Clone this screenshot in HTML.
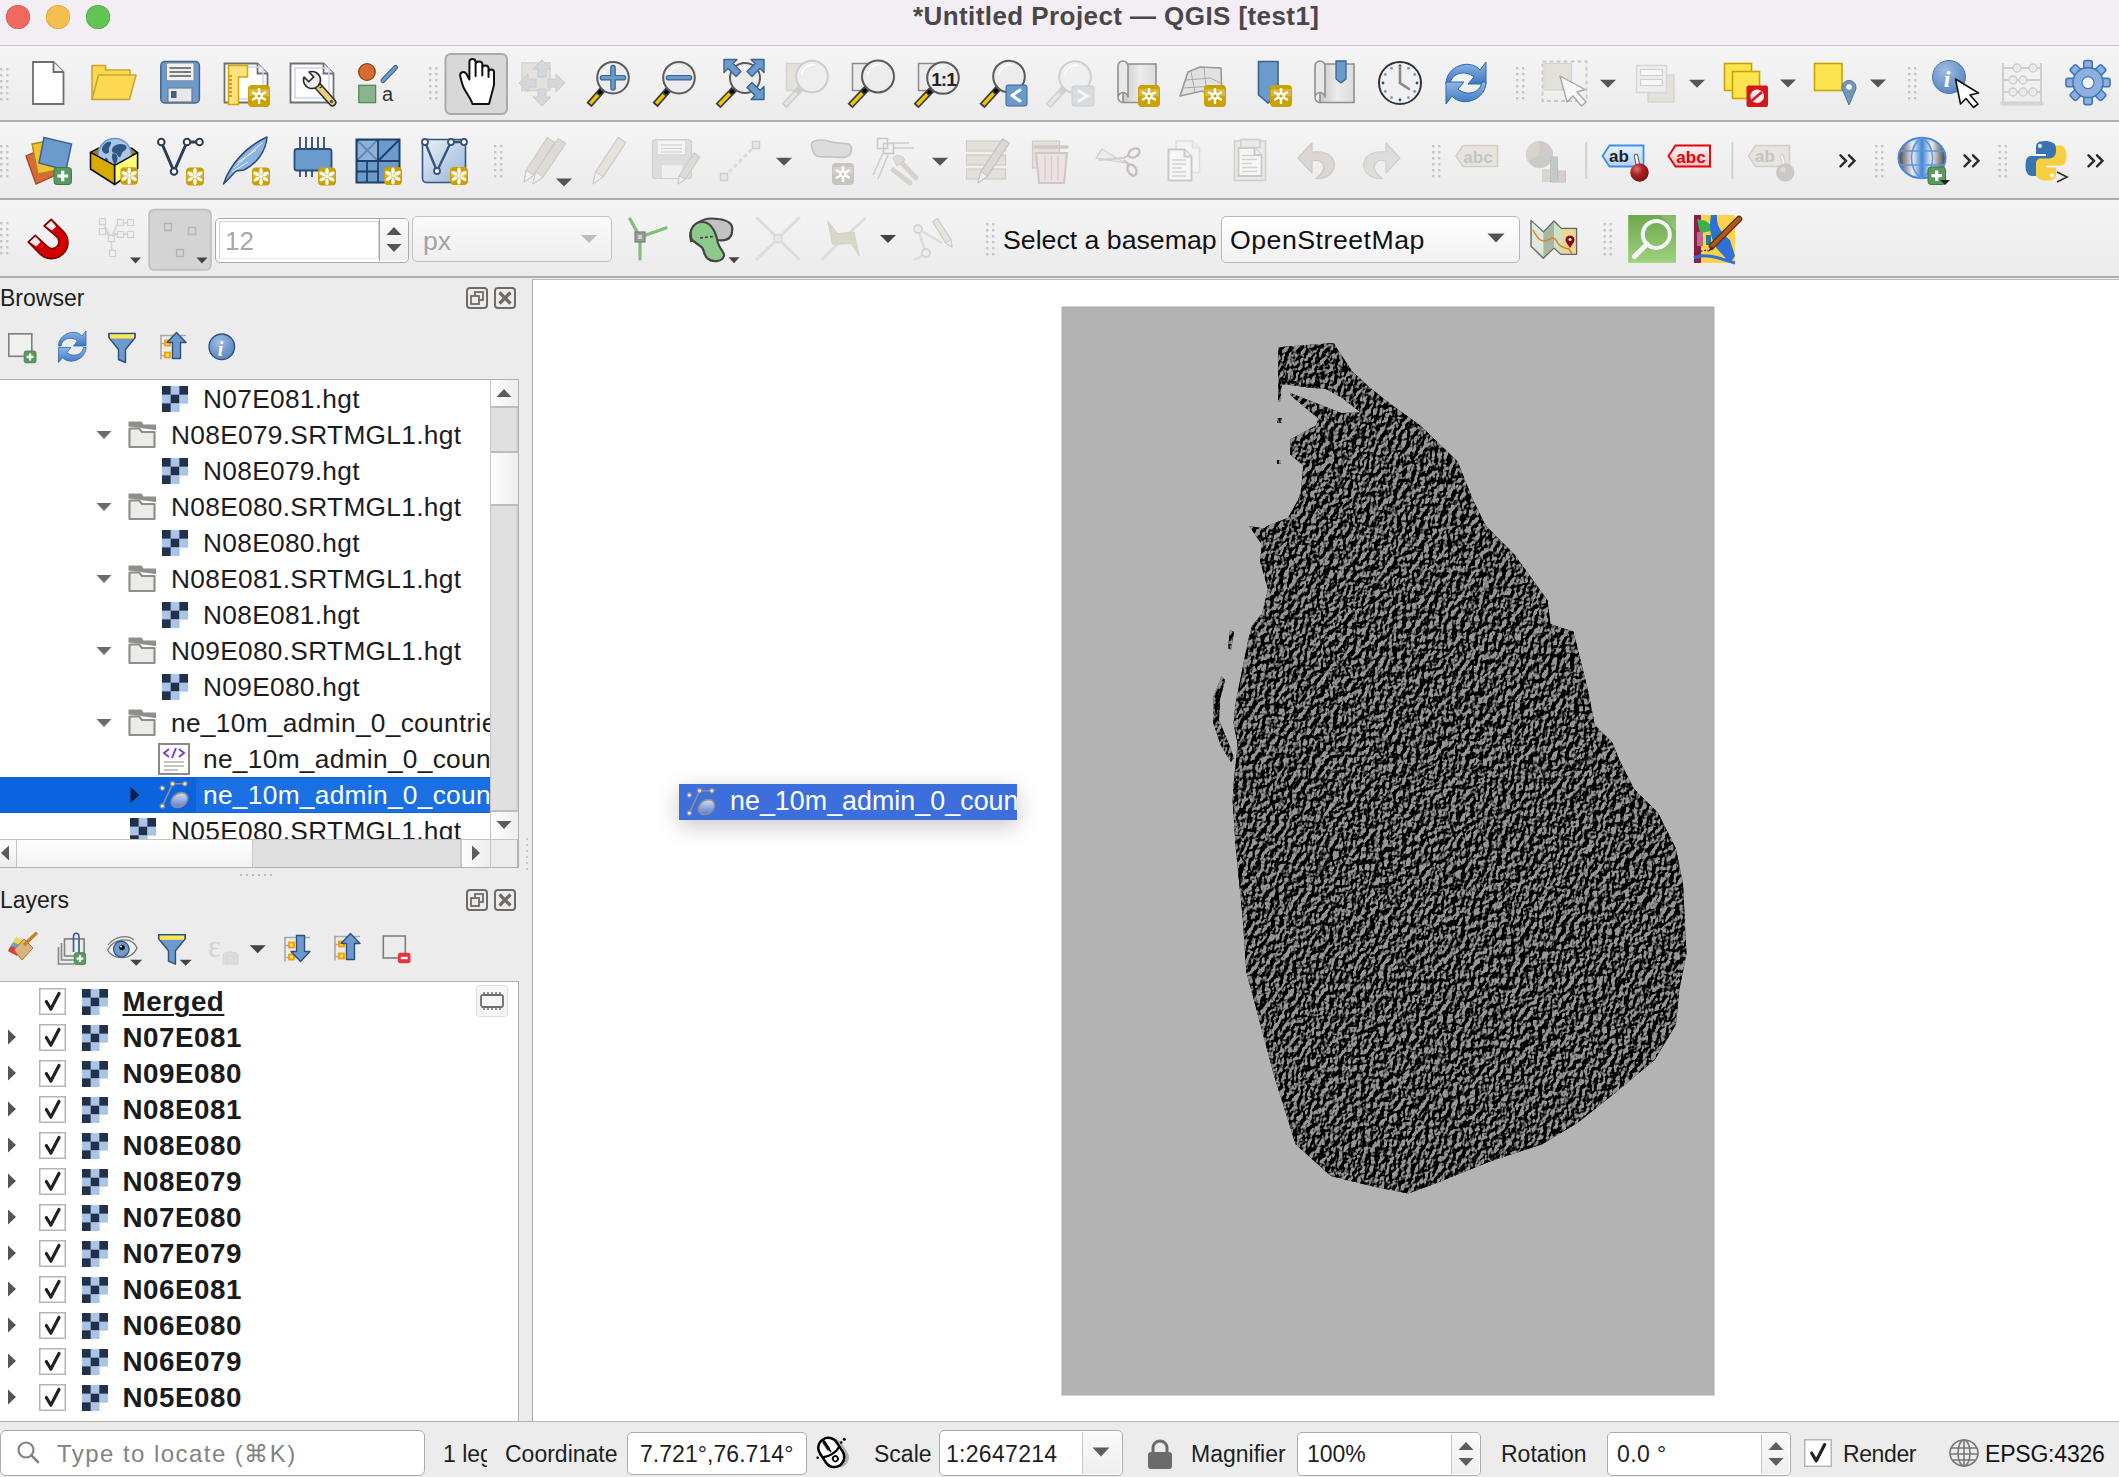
<!DOCTYPE html>
<html><head><meta charset="utf-8"><style>
html,body{margin:0;padding:0;width:2119px;height:1477px;overflow:hidden;background:#ececec;font-family:"Liberation Sans", sans-serif;}
div,svg{box-sizing:border-box;}
</style></head><body>
<div style="position:absolute;left:0px;top:0px;width:2119px;height:45px;background:#f3eef4;"></div><div style="position:absolute;left:0px;top:45px;width:2119px;height:1px;background:#c9c5ca;"></div><div style="position:absolute;left:6px;top:5px;width:24px;height:24px;border-radius:50%;background:#ee6a5f;box-shadow:inset 0 0 0 0.6px #d9574c;"></div><div style="position:absolute;left:46px;top:5px;width:24px;height:24px;border-radius:50%;background:#f5bf4f;box-shadow:inset 0 0 0 0.6px #dba53c;"></div><div style="position:absolute;left:86px;top:5px;width:24px;height:24px;border-radius:50%;background:#61c454;box-shadow:inset 0 0 0 0.6px #4ea83f;"></div><div style="position:absolute;left:913px;top:3.19px;height:31.2px;line-height:26px;font-size:26px;font-weight:bold;color:#4b4649;white-space:pre;letter-spacing:0.42px;">*Untitled Project — QGIS [test1]</div><div style="position:absolute;left:0px;top:46px;width:2119px;height:74px;background:linear-gradient(#f5f5f5,#ebebeb);"></div><div style="position:absolute;left:0px;top:122px;width:2119px;height:76px;background:linear-gradient(#f5f5f5,#ebebeb);"></div><div style="position:absolute;left:0px;top:200px;width:2119px;height:76px;background:linear-gradient(#f5f5f5,#ebebeb);"></div><div style="position:absolute;left:0px;top:120px;width:2119px;height:2px;background:#adadad;"></div><div style="position:absolute;left:0px;top:198px;width:2119px;height:2px;background:#adadad;"></div><div style="position:absolute;left:0px;top:276px;width:2119px;height:2px;background:#adadad;"></div><div style="position:absolute;left:0px;top:278px;width:533px;height:1143px;background:#ececec;"></div><div style="position:absolute;left:518px;top:278px;width:14px;height:1143px;background:#ececec;"></div><div style="position:absolute;left:532px;top:279px;width:1587px;height:1142px;background:#ffffff;border-left:1px solid #a9a9a9;border-top:1px solid #bdbdbd;"></div><div style="position:absolute;left:0px;top:1421px;width:2119px;height:56px;background:#ececec;border-top:1px solid #b4b4b4;"></div><div style="position:absolute;left:0px;top:286.53px;height:27.599999999999998px;line-height:23px;font-size:23px;font-weight:normal;color:#1e1e1e;white-space:pre;">Browser</div><div style="position:absolute;left:0px;top:888.53px;height:27.599999999999998px;line-height:23px;font-size:23px;font-weight:normal;color:#1e1e1e;white-space:pre;">Layers</div><div style="position:absolute;left:0px;top:379px;width:519px;height:489px;background:#fff;border:1px solid #b0b0b0;border-left:none;"></div><div style="position:absolute;left:0px;top:981px;width:519px;height:441px;background:#fff;border:1px solid #b0b0b0;border-left:none;"></div><div style="position:absolute;left:0;top:380;width:490px;height:459px;overflow:hidden;top:380px;"><svg style="position:absolute;left:162px;top:6px;" width="26" height="26" viewBox="0 0 26 26"><rect x="0.00" y="0.00" width="8.97" height="8.97" fill="#223049"/><rect x="8.67" y="0.00" width="8.97" height="8.97" fill="#a9c5e6"/><rect x="17.33" y="0.00" width="8.97" height="8.97" fill="#223049"/><rect x="0.00" y="8.67" width="8.97" height="8.97" fill="#a9c5e6"/><rect x="8.67" y="8.67" width="8.97" height="8.97" fill="#223049"/><rect x="17.33" y="8.67" width="8.97" height="8.97" fill="#a9c5e6"/><rect x="0.00" y="17.33" width="8.97" height="8.97" fill="#223049"/><rect x="8.67" y="17.33" width="8.97" height="8.97" fill="#a9c5e6"/></svg><div style="position:absolute;left:203px;top:5.74px;height:31.56px;line-height:26.3px;font-size:26.3px;font-weight:normal;color:#1d1d1d;white-space:pre;letter-spacing:0.3px;">N07E081.hgt</div><svg style="position:absolute;left:0;top:0;overflow:visible" width="1" height="1"><polygon points="96.5,51.0 111.5,51.0 104,59.0" fill="#6b6b6b"/></svg><svg style="position:absolute;left:128px;top:41px;" width="28" height="28" viewBox="0 0 28 28"><path d="M1.5 5.5 V1.5 H13 L15 4.5 H27 V9" fill="#8f908a" stroke="#8f908a" stroke-width="2"/><path d="M1.5 26 V7.5 H11 L14 11 H26.5 V26 Z" fill="#ececec" stroke="#8f908a" stroke-width="2.2" stroke-linejoin="round"/></svg><div style="position:absolute;left:171px;top:41.74px;height:31.56px;line-height:26.3px;font-size:26.3px;font-weight:normal;color:#1d1d1d;white-space:pre;letter-spacing:0.3px;">N08E079.SRTMGL1.hgt</div><svg style="position:absolute;left:162px;top:78px;" width="26" height="26" viewBox="0 0 26 26"><rect x="0.00" y="0.00" width="8.97" height="8.97" fill="#223049"/><rect x="8.67" y="0.00" width="8.97" height="8.97" fill="#a9c5e6"/><rect x="17.33" y="0.00" width="8.97" height="8.97" fill="#223049"/><rect x="0.00" y="8.67" width="8.97" height="8.97" fill="#a9c5e6"/><rect x="8.67" y="8.67" width="8.97" height="8.97" fill="#223049"/><rect x="17.33" y="8.67" width="8.97" height="8.97" fill="#a9c5e6"/><rect x="0.00" y="17.33" width="8.97" height="8.97" fill="#223049"/><rect x="8.67" y="17.33" width="8.97" height="8.97" fill="#a9c5e6"/></svg><div style="position:absolute;left:203px;top:77.74px;height:31.56px;line-height:26.3px;font-size:26.3px;font-weight:normal;color:#1d1d1d;white-space:pre;letter-spacing:0.3px;">N08E079.hgt</div><svg style="position:absolute;left:0;top:0;overflow:visible" width="1" height="1"><polygon points="96.5,123.0 111.5,123.0 104,131.0" fill="#6b6b6b"/></svg><svg style="position:absolute;left:128px;top:113px;" width="28" height="28" viewBox="0 0 28 28"><path d="M1.5 5.5 V1.5 H13 L15 4.5 H27 V9" fill="#8f908a" stroke="#8f908a" stroke-width="2"/><path d="M1.5 26 V7.5 H11 L14 11 H26.5 V26 Z" fill="#ececec" stroke="#8f908a" stroke-width="2.2" stroke-linejoin="round"/></svg><div style="position:absolute;left:171px;top:113.74px;height:31.56px;line-height:26.3px;font-size:26.3px;font-weight:normal;color:#1d1d1d;white-space:pre;letter-spacing:0.3px;">N08E080.SRTMGL1.hgt</div><svg style="position:absolute;left:162px;top:150px;" width="26" height="26" viewBox="0 0 26 26"><rect x="0.00" y="0.00" width="8.97" height="8.97" fill="#223049"/><rect x="8.67" y="0.00" width="8.97" height="8.97" fill="#a9c5e6"/><rect x="17.33" y="0.00" width="8.97" height="8.97" fill="#223049"/><rect x="0.00" y="8.67" width="8.97" height="8.97" fill="#a9c5e6"/><rect x="8.67" y="8.67" width="8.97" height="8.97" fill="#223049"/><rect x="17.33" y="8.67" width="8.97" height="8.97" fill="#a9c5e6"/><rect x="0.00" y="17.33" width="8.97" height="8.97" fill="#223049"/><rect x="8.67" y="17.33" width="8.97" height="8.97" fill="#a9c5e6"/></svg><div style="position:absolute;left:203px;top:149.74px;height:31.56px;line-height:26.3px;font-size:26.3px;font-weight:normal;color:#1d1d1d;white-space:pre;letter-spacing:0.3px;">N08E080.hgt</div><svg style="position:absolute;left:0;top:0;overflow:visible" width="1" height="1"><polygon points="96.5,195.0 111.5,195.0 104,203.0" fill="#6b6b6b"/></svg><svg style="position:absolute;left:128px;top:185px;" width="28" height="28" viewBox="0 0 28 28"><path d="M1.5 5.5 V1.5 H13 L15 4.5 H27 V9" fill="#8f908a" stroke="#8f908a" stroke-width="2"/><path d="M1.5 26 V7.5 H11 L14 11 H26.5 V26 Z" fill="#ececec" stroke="#8f908a" stroke-width="2.2" stroke-linejoin="round"/></svg><div style="position:absolute;left:171px;top:185.74px;height:31.56px;line-height:26.3px;font-size:26.3px;font-weight:normal;color:#1d1d1d;white-space:pre;letter-spacing:0.3px;">N08E081.SRTMGL1.hgt</div><svg style="position:absolute;left:162px;top:222px;" width="26" height="26" viewBox="0 0 26 26"><rect x="0.00" y="0.00" width="8.97" height="8.97" fill="#223049"/><rect x="8.67" y="0.00" width="8.97" height="8.97" fill="#a9c5e6"/><rect x="17.33" y="0.00" width="8.97" height="8.97" fill="#223049"/><rect x="0.00" y="8.67" width="8.97" height="8.97" fill="#a9c5e6"/><rect x="8.67" y="8.67" width="8.97" height="8.97" fill="#223049"/><rect x="17.33" y="8.67" width="8.97" height="8.97" fill="#a9c5e6"/><rect x="0.00" y="17.33" width="8.97" height="8.97" fill="#223049"/><rect x="8.67" y="17.33" width="8.97" height="8.97" fill="#a9c5e6"/></svg><div style="position:absolute;left:203px;top:221.74px;height:31.56px;line-height:26.3px;font-size:26.3px;font-weight:normal;color:#1d1d1d;white-space:pre;letter-spacing:0.3px;">N08E081.hgt</div><svg style="position:absolute;left:0;top:0;overflow:visible" width="1" height="1"><polygon points="96.5,267.0 111.5,267.0 104,275.0" fill="#6b6b6b"/></svg><svg style="position:absolute;left:128px;top:257px;" width="28" height="28" viewBox="0 0 28 28"><path d="M1.5 5.5 V1.5 H13 L15 4.5 H27 V9" fill="#8f908a" stroke="#8f908a" stroke-width="2"/><path d="M1.5 26 V7.5 H11 L14 11 H26.5 V26 Z" fill="#ececec" stroke="#8f908a" stroke-width="2.2" stroke-linejoin="round"/></svg><div style="position:absolute;left:171px;top:257.74px;height:31.56px;line-height:26.3px;font-size:26.3px;font-weight:normal;color:#1d1d1d;white-space:pre;letter-spacing:0.3px;">N09E080.SRTMGL1.hgt</div><svg style="position:absolute;left:162px;top:294px;" width="26" height="26" viewBox="0 0 26 26"><rect x="0.00" y="0.00" width="8.97" height="8.97" fill="#223049"/><rect x="8.67" y="0.00" width="8.97" height="8.97" fill="#a9c5e6"/><rect x="17.33" y="0.00" width="8.97" height="8.97" fill="#223049"/><rect x="0.00" y="8.67" width="8.97" height="8.97" fill="#a9c5e6"/><rect x="8.67" y="8.67" width="8.97" height="8.97" fill="#223049"/><rect x="17.33" y="8.67" width="8.97" height="8.97" fill="#a9c5e6"/><rect x="0.00" y="17.33" width="8.97" height="8.97" fill="#223049"/><rect x="8.67" y="17.33" width="8.97" height="8.97" fill="#a9c5e6"/></svg><div style="position:absolute;left:203px;top:293.74px;height:31.56px;line-height:26.3px;font-size:26.3px;font-weight:normal;color:#1d1d1d;white-space:pre;letter-spacing:0.3px;">N09E080.hgt</div><svg style="position:absolute;left:0;top:0;overflow:visible" width="1" height="1"><polygon points="96.5,339.0 111.5,339.0 104,347.0" fill="#6b6b6b"/></svg><svg style="position:absolute;left:128px;top:329px;" width="28" height="28" viewBox="0 0 28 28"><path d="M1.5 5.5 V1.5 H13 L15 4.5 H27 V9" fill="#8f908a" stroke="#8f908a" stroke-width="2"/><path d="M1.5 26 V7.5 H11 L14 11 H26.5 V26 Z" fill="#ececec" stroke="#8f908a" stroke-width="2.2" stroke-linejoin="round"/></svg><div style="position:absolute;left:171px;top:329.74px;height:31.56px;line-height:26.3px;font-size:26.3px;font-weight:normal;color:#1d1d1d;white-space:pre;letter-spacing:0.3px;">ne_10m_admin_0_countries</div><svg style="position:absolute;left:158px;top:363px;" width="32" height="32" viewBox="0 0 32 32"><rect x="1" y="1" width="30" height="30" fill="#fff" stroke="#8a8a8a" stroke-width="2"/><path d="M11 6 L6 10 L11 14 M21 6 L26 10 L21 14 M18 5 L14 15" fill="none" stroke="#7a3fc7" stroke-width="2"/><path d="M6 19 H26 M6 23 H26 M6 27 H20" stroke="#b0b0b0" stroke-width="1.5"/></svg><div style="position:absolute;left:203px;top:365.74px;height:31.56px;line-height:26.3px;font-size:26.3px;font-weight:normal;color:#1d1d1d;white-space:pre;letter-spacing:0.3px;">ne_10m_admin_0_countries</div><div style="position:absolute;left:0px;top:397px;width:490px;height:36px;background:#0b64de;"></div><div style="position:absolute;left:196px;top:398px;width:294px;height:34px;background:#1a6fe3;"></div><svg style="position:absolute;left:0;top:0;overflow:visible" width="1" height="1"><polygon points="130.5,407.0 130.5,423.0 139.5,415" fill="#0a1f4a"/></svg><svg style="position:absolute;left:158px;top:399px;" width="32" height="32" viewBox="0 0 32 32"><defs><linearGradient id="vbg" x1="0" y1="1" x2="1" y2="0"><stop offset="0" stop-color="#3f66c8"/><stop offset="1" stop-color="#f4f6fb"/></linearGradient></defs><path d="M4.3 27 L14.6 4.8 H26.9" fill="none" stroke="#8f8f8f" stroke-width="1.6"/><ellipse cx="21.5" cy="21" rx="8.8" ry="6.6" transform="rotate(-35 21.5 21)" fill="url(#vbg)" stroke="#8f8f8f" stroke-width="1.8"/><circle cx="4.3" cy="9.1" r="2.2" fill="#e8e8e8" stroke="#8a8a8a" stroke-width="1.2"/><circle cx="14.6" cy="4.8" r="2.2" fill="#e8e8e8" stroke="#8a8a8a" stroke-width="1.2"/><circle cx="26.9" cy="4.8" r="2.2" fill="#e8e8e8" stroke="#8a8a8a" stroke-width="1.2"/><circle cx="4.3" cy="27" r="2.2" fill="#e8e8e8" stroke="#8a8a8a" stroke-width="1.2"/></svg><div style="position:absolute;left:203px;top:401.74px;height:31.56px;line-height:26.3px;font-size:26.3px;font-weight:normal;color:#ffffff;white-space:pre;letter-spacing:0.3px;">ne_10m_admin_0_countries</div><svg style="position:absolute;left:130px;top:438px;" width="26" height="26" viewBox="0 0 26 26"><rect x="0.00" y="0.00" width="8.97" height="8.97" fill="#223049"/><rect x="8.67" y="0.00" width="8.97" height="8.97" fill="#a9c5e6"/><rect x="17.33" y="0.00" width="8.97" height="8.97" fill="#223049"/><rect x="0.00" y="8.67" width="8.97" height="8.97" fill="#a9c5e6"/><rect x="8.67" y="8.67" width="8.97" height="8.97" fill="#223049"/><rect x="17.33" y="8.67" width="8.97" height="8.97" fill="#a9c5e6"/><rect x="0.00" y="17.33" width="8.97" height="8.97" fill="#223049"/><rect x="8.67" y="17.33" width="8.97" height="8.97" fill="#a9c5e6"/></svg><div style="position:absolute;left:171px;top:437.74px;height:31.56px;line-height:26.3px;font-size:26.3px;font-weight:normal;color:#1d1d1d;white-space:pre;letter-spacing:0.3px;">N05E080.SRTMGL1.hgt</div></div><div style="position:absolute;left:490px;top:380px;width:28px;height:459px;background:#ececec;border-left:1px solid #c4c4c4;"></div><div style="position:absolute;left:491px;top:380px;width:27px;height:27px;background:linear-gradient(90deg,#fdfdfd,#eeeeee);"></div><svg style="position:absolute;left:0;top:0;overflow:visible" width="1" height="1"><polygon points="496.5,397.0 511.5,397.0 504,389.0" fill="#5c5c5c"/></svg><div style="position:absolute;left:491px;top:406px;width:27px;height:2px;background:#bdbdbd;"></div><div style="position:absolute;left:491px;top:408px;width:27px;height:43px;background:#e0e0e0;border-right:2px solid #d4d4d4;"></div><div style="position:absolute;left:491px;top:451px;width:27px;height:2px;background:#bdbdbd;"></div><div style="position:absolute;left:491px;top:453px;width:27px;height:51px;background:linear-gradient(90deg,#fdfdfd,#eeeeee);"></div><div style="position:absolute;left:491px;top:504px;width:27px;height:2px;background:#bdbdbd;"></div><div style="position:absolute;left:491px;top:506px;width:27px;height:304px;background:#e0e0e0;border-right:2px solid #d4d4d4;"></div><div style="position:absolute;left:491px;top:810px;width:27px;height:2px;background:#bdbdbd;"></div><div style="position:absolute;left:491px;top:812px;width:27px;height:27px;background:linear-gradient(90deg,#fdfdfd,#eeeeee);"></div><svg style="position:absolute;left:0;top:0;overflow:visible" width="1" height="1"><polygon points="496.5,821.0 511.5,821.0 504,829.0" fill="#5c5c5c"/></svg><div style="position:absolute;left:0px;top:839px;width:518px;height:29px;background:#ececec;border-top:1px solid #c4c4c4;border-bottom:1px solid #b0b0b0;"></div><div style="position:absolute;left:0px;top:840px;width:17px;height:27px;background:linear-gradient(#fdfdfd,#eeeeee);border-right:1px solid #c4c4c4;"></div><svg style="position:absolute;left:0;top:0;overflow:visible" width="1" height="1"><polygon points="9.0,845.5 9.0,860.5 1.0,853" fill="#5c5c5c"/></svg><div style="position:absolute;left:17px;top:840px;width:235px;height:27px;background:linear-gradient(#fdfdfd,#f3f3f3);"></div><div style="position:absolute;left:252px;top:840px;width:210px;height:27px;background:#e0e0e0;border-left:1px solid #c8c8c8;border-right:2px solid #c8c8c8;"></div><div style="position:absolute;left:462px;top:840px;width:28px;height:27px;background:linear-gradient(90deg,#fdfdfd,#eeeeee);"></div><svg style="position:absolute;left:0;top:0;overflow:visible" width="1" height="1"><polygon points="472.0,845.5 472.0,860.5 480.0,853" fill="#5c5c5c"/></svg><div style="position:absolute;left:490px;top:839px;width:28px;height:29px;background:#ececec;border-left:1px solid #c4c4c4;border-top:1px solid #c4c4c4;border-bottom:1px solid #b0b0b0;border-right:1px solid #b0b0b0;"></div><div style="position:absolute;left:240px;top:874px;width:2px;height:2px;background:#bdbdbd;"></div><div style="position:absolute;left:246px;top:874px;width:2px;height:2px;background:#bdbdbd;"></div><div style="position:absolute;left:252px;top:874px;width:2px;height:2px;background:#bdbdbd;"></div><div style="position:absolute;left:258px;top:874px;width:2px;height:2px;background:#bdbdbd;"></div><div style="position:absolute;left:264px;top:874px;width:2px;height:2px;background:#bdbdbd;"></div><div style="position:absolute;left:270px;top:874px;width:2px;height:2px;background:#bdbdbd;"></div><div style="position:absolute;left:526px;top:838px;width:2px;height:2px;background:#c8c8c8;"></div><div style="position:absolute;left:526px;top:844px;width:2px;height:2px;background:#c8c8c8;"></div><div style="position:absolute;left:526px;top:850px;width:2px;height:2px;background:#c8c8c8;"></div><div style="position:absolute;left:526px;top:856px;width:2px;height:2px;background:#c8c8c8;"></div><div style="position:absolute;left:526px;top:862px;width:2px;height:2px;background:#c8c8c8;"></div><div style="position:absolute;left:526px;top:868px;width:2px;height:2px;background:#c8c8c8;"></div><svg style="position:absolute;left:466px;top:287px;" width="22" height="22" viewBox="0 0 22 22"><rect x="1" y="1" width="20" height="20" rx="3" fill="none" stroke="#6f6c68" stroke-width="2"/><rect x="9" y="5" width="8" height="8" fill="none" stroke="#6f6c68" stroke-width="1.8"/><rect x="5" y="9" width="8" height="8" fill="#ececec" stroke="#6f6c68" stroke-width="1.8"/></svg><svg style="position:absolute;left:494px;top:287px;" width="22" height="22" viewBox="0 0 22 22"><rect x="1" y="1" width="20" height="20" rx="3" fill="none" stroke="#6f6c68" stroke-width="2"/><path d="M5.5 5.5 L16.5 16.5 M16.5 5.5 L5.5 16.5" stroke="#6f6c68" stroke-width="3.2"/></svg><svg style="position:absolute;left:466px;top:889px;" width="22" height="22" viewBox="0 0 22 22"><rect x="1" y="1" width="20" height="20" rx="3" fill="none" stroke="#6f6c68" stroke-width="2"/><rect x="9" y="5" width="8" height="8" fill="none" stroke="#6f6c68" stroke-width="1.8"/><rect x="5" y="9" width="8" height="8" fill="#ececec" stroke="#6f6c68" stroke-width="1.8"/></svg><svg style="position:absolute;left:494px;top:889px;" width="22" height="22" viewBox="0 0 22 22"><rect x="1" y="1" width="20" height="20" rx="3" fill="none" stroke="#6f6c68" stroke-width="2"/><path d="M5.5 5.5 L16.5 16.5 M16.5 5.5 L5.5 16.5" stroke="#6f6c68" stroke-width="3.2"/></svg><svg style="position:absolute;left:39px;top:988px;" width="27" height="27" viewBox="0 0 27 27"><rect x="0.75" y="0.75" width="25.5" height="25.5" fill="#fff" stroke="#b5b5b5" stroke-width="1.5"/><path d="M7.3 13.5 L11.9 21.1 L20.0 5.4" fill="none" stroke="#222" stroke-width="3.2" stroke-linecap="round" stroke-linejoin="round"/></svg><svg style="position:absolute;left:82px;top:989px;" width="26" height="26" viewBox="0 0 26 26"><rect x="0.00" y="0.00" width="8.97" height="8.97" fill="#223049"/><rect x="8.67" y="0.00" width="8.97" height="8.97" fill="#a9c5e6"/><rect x="17.33" y="0.00" width="8.97" height="8.97" fill="#223049"/><rect x="0.00" y="8.67" width="8.97" height="8.97" fill="#a9c5e6"/><rect x="8.67" y="8.67" width="8.97" height="8.97" fill="#223049"/><rect x="17.33" y="8.67" width="8.97" height="8.97" fill="#a9c5e6"/><rect x="0.00" y="17.33" width="8.97" height="8.97" fill="#223049"/><rect x="8.67" y="17.33" width="8.97" height="8.97" fill="#a9c5e6"/></svg><div style="position:absolute;left:122.5px;top:987.97px;height:33.36px;line-height:27.8px;font-size:27.8px;font-weight:bold;color:#1b1b1b;white-space:pre;letter-spacing:0.5px;text-decoration:underline;text-decoration-thickness:2px;text-underline-offset:3px;">Merged</div><svg style="position:absolute;left:0;top:0;overflow:visible" width="1" height="1"><polygon points="8.0,1029.5 8.0,1044.5 16.0,1037" fill="#555555"/></svg><svg style="position:absolute;left:39px;top:1024px;" width="27" height="27" viewBox="0 0 27 27"><rect x="0.75" y="0.75" width="25.5" height="25.5" fill="#fff" stroke="#b5b5b5" stroke-width="1.5"/><path d="M7.3 13.5 L11.9 21.1 L20.0 5.4" fill="none" stroke="#222" stroke-width="3.2" stroke-linecap="round" stroke-linejoin="round"/></svg><svg style="position:absolute;left:82px;top:1025px;" width="26" height="26" viewBox="0 0 26 26"><rect x="0.00" y="0.00" width="8.97" height="8.97" fill="#223049"/><rect x="8.67" y="0.00" width="8.97" height="8.97" fill="#a9c5e6"/><rect x="17.33" y="0.00" width="8.97" height="8.97" fill="#223049"/><rect x="0.00" y="8.67" width="8.97" height="8.97" fill="#a9c5e6"/><rect x="8.67" y="8.67" width="8.97" height="8.97" fill="#223049"/><rect x="17.33" y="8.67" width="8.97" height="8.97" fill="#a9c5e6"/><rect x="0.00" y="17.33" width="8.97" height="8.97" fill="#223049"/><rect x="8.67" y="17.33" width="8.97" height="8.97" fill="#a9c5e6"/></svg><div style="position:absolute;left:122.5px;top:1023.97px;height:33.36px;line-height:27.8px;font-size:27.8px;font-weight:bold;color:#1b1b1b;white-space:pre;letter-spacing:0.5px;">N07E081</div><svg style="position:absolute;left:0;top:0;overflow:visible" width="1" height="1"><polygon points="8.0,1065.5 8.0,1080.5 16.0,1073" fill="#555555"/></svg><svg style="position:absolute;left:39px;top:1060px;" width="27" height="27" viewBox="0 0 27 27"><rect x="0.75" y="0.75" width="25.5" height="25.5" fill="#fff" stroke="#b5b5b5" stroke-width="1.5"/><path d="M7.3 13.5 L11.9 21.1 L20.0 5.4" fill="none" stroke="#222" stroke-width="3.2" stroke-linecap="round" stroke-linejoin="round"/></svg><svg style="position:absolute;left:82px;top:1061px;" width="26" height="26" viewBox="0 0 26 26"><rect x="0.00" y="0.00" width="8.97" height="8.97" fill="#223049"/><rect x="8.67" y="0.00" width="8.97" height="8.97" fill="#a9c5e6"/><rect x="17.33" y="0.00" width="8.97" height="8.97" fill="#223049"/><rect x="0.00" y="8.67" width="8.97" height="8.97" fill="#a9c5e6"/><rect x="8.67" y="8.67" width="8.97" height="8.97" fill="#223049"/><rect x="17.33" y="8.67" width="8.97" height="8.97" fill="#a9c5e6"/><rect x="0.00" y="17.33" width="8.97" height="8.97" fill="#223049"/><rect x="8.67" y="17.33" width="8.97" height="8.97" fill="#a9c5e6"/></svg><div style="position:absolute;left:122.5px;top:1059.97px;height:33.36px;line-height:27.8px;font-size:27.8px;font-weight:bold;color:#1b1b1b;white-space:pre;letter-spacing:0.5px;">N09E080</div><svg style="position:absolute;left:0;top:0;overflow:visible" width="1" height="1"><polygon points="8.0,1101.5 8.0,1116.5 16.0,1109" fill="#555555"/></svg><svg style="position:absolute;left:39px;top:1096px;" width="27" height="27" viewBox="0 0 27 27"><rect x="0.75" y="0.75" width="25.5" height="25.5" fill="#fff" stroke="#b5b5b5" stroke-width="1.5"/><path d="M7.3 13.5 L11.9 21.1 L20.0 5.4" fill="none" stroke="#222" stroke-width="3.2" stroke-linecap="round" stroke-linejoin="round"/></svg><svg style="position:absolute;left:82px;top:1097px;" width="26" height="26" viewBox="0 0 26 26"><rect x="0.00" y="0.00" width="8.97" height="8.97" fill="#223049"/><rect x="8.67" y="0.00" width="8.97" height="8.97" fill="#a9c5e6"/><rect x="17.33" y="0.00" width="8.97" height="8.97" fill="#223049"/><rect x="0.00" y="8.67" width="8.97" height="8.97" fill="#a9c5e6"/><rect x="8.67" y="8.67" width="8.97" height="8.97" fill="#223049"/><rect x="17.33" y="8.67" width="8.97" height="8.97" fill="#a9c5e6"/><rect x="0.00" y="17.33" width="8.97" height="8.97" fill="#223049"/><rect x="8.67" y="17.33" width="8.97" height="8.97" fill="#a9c5e6"/></svg><div style="position:absolute;left:122.5px;top:1095.97px;height:33.36px;line-height:27.8px;font-size:27.8px;font-weight:bold;color:#1b1b1b;white-space:pre;letter-spacing:0.5px;">N08E081</div><svg style="position:absolute;left:0;top:0;overflow:visible" width="1" height="1"><polygon points="8.0,1137.5 8.0,1152.5 16.0,1145" fill="#555555"/></svg><svg style="position:absolute;left:39px;top:1132px;" width="27" height="27" viewBox="0 0 27 27"><rect x="0.75" y="0.75" width="25.5" height="25.5" fill="#fff" stroke="#b5b5b5" stroke-width="1.5"/><path d="M7.3 13.5 L11.9 21.1 L20.0 5.4" fill="none" stroke="#222" stroke-width="3.2" stroke-linecap="round" stroke-linejoin="round"/></svg><svg style="position:absolute;left:82px;top:1133px;" width="26" height="26" viewBox="0 0 26 26"><rect x="0.00" y="0.00" width="8.97" height="8.97" fill="#223049"/><rect x="8.67" y="0.00" width="8.97" height="8.97" fill="#a9c5e6"/><rect x="17.33" y="0.00" width="8.97" height="8.97" fill="#223049"/><rect x="0.00" y="8.67" width="8.97" height="8.97" fill="#a9c5e6"/><rect x="8.67" y="8.67" width="8.97" height="8.97" fill="#223049"/><rect x="17.33" y="8.67" width="8.97" height="8.97" fill="#a9c5e6"/><rect x="0.00" y="17.33" width="8.97" height="8.97" fill="#223049"/><rect x="8.67" y="17.33" width="8.97" height="8.97" fill="#a9c5e6"/></svg><div style="position:absolute;left:122.5px;top:1131.97px;height:33.36px;line-height:27.8px;font-size:27.8px;font-weight:bold;color:#1b1b1b;white-space:pre;letter-spacing:0.5px;">N08E080</div><svg style="position:absolute;left:0;top:0;overflow:visible" width="1" height="1"><polygon points="8.0,1173.5 8.0,1188.5 16.0,1181" fill="#555555"/></svg><svg style="position:absolute;left:39px;top:1168px;" width="27" height="27" viewBox="0 0 27 27"><rect x="0.75" y="0.75" width="25.5" height="25.5" fill="#fff" stroke="#b5b5b5" stroke-width="1.5"/><path d="M7.3 13.5 L11.9 21.1 L20.0 5.4" fill="none" stroke="#222" stroke-width="3.2" stroke-linecap="round" stroke-linejoin="round"/></svg><svg style="position:absolute;left:82px;top:1169px;" width="26" height="26" viewBox="0 0 26 26"><rect x="0.00" y="0.00" width="8.97" height="8.97" fill="#223049"/><rect x="8.67" y="0.00" width="8.97" height="8.97" fill="#a9c5e6"/><rect x="17.33" y="0.00" width="8.97" height="8.97" fill="#223049"/><rect x="0.00" y="8.67" width="8.97" height="8.97" fill="#a9c5e6"/><rect x="8.67" y="8.67" width="8.97" height="8.97" fill="#223049"/><rect x="17.33" y="8.67" width="8.97" height="8.97" fill="#a9c5e6"/><rect x="0.00" y="17.33" width="8.97" height="8.97" fill="#223049"/><rect x="8.67" y="17.33" width="8.97" height="8.97" fill="#a9c5e6"/></svg><div style="position:absolute;left:122.5px;top:1167.97px;height:33.36px;line-height:27.8px;font-size:27.8px;font-weight:bold;color:#1b1b1b;white-space:pre;letter-spacing:0.5px;">N08E079</div><svg style="position:absolute;left:0;top:0;overflow:visible" width="1" height="1"><polygon points="8.0,1209.5 8.0,1224.5 16.0,1217" fill="#555555"/></svg><svg style="position:absolute;left:39px;top:1204px;" width="27" height="27" viewBox="0 0 27 27"><rect x="0.75" y="0.75" width="25.5" height="25.5" fill="#fff" stroke="#b5b5b5" stroke-width="1.5"/><path d="M7.3 13.5 L11.9 21.1 L20.0 5.4" fill="none" stroke="#222" stroke-width="3.2" stroke-linecap="round" stroke-linejoin="round"/></svg><svg style="position:absolute;left:82px;top:1205px;" width="26" height="26" viewBox="0 0 26 26"><rect x="0.00" y="0.00" width="8.97" height="8.97" fill="#223049"/><rect x="8.67" y="0.00" width="8.97" height="8.97" fill="#a9c5e6"/><rect x="17.33" y="0.00" width="8.97" height="8.97" fill="#223049"/><rect x="0.00" y="8.67" width="8.97" height="8.97" fill="#a9c5e6"/><rect x="8.67" y="8.67" width="8.97" height="8.97" fill="#223049"/><rect x="17.33" y="8.67" width="8.97" height="8.97" fill="#a9c5e6"/><rect x="0.00" y="17.33" width="8.97" height="8.97" fill="#223049"/><rect x="8.67" y="17.33" width="8.97" height="8.97" fill="#a9c5e6"/></svg><div style="position:absolute;left:122.5px;top:1203.97px;height:33.36px;line-height:27.8px;font-size:27.8px;font-weight:bold;color:#1b1b1b;white-space:pre;letter-spacing:0.5px;">N07E080</div><svg style="position:absolute;left:0;top:0;overflow:visible" width="1" height="1"><polygon points="8.0,1245.5 8.0,1260.5 16.0,1253" fill="#555555"/></svg><svg style="position:absolute;left:39px;top:1240px;" width="27" height="27" viewBox="0 0 27 27"><rect x="0.75" y="0.75" width="25.5" height="25.5" fill="#fff" stroke="#b5b5b5" stroke-width="1.5"/><path d="M7.3 13.5 L11.9 21.1 L20.0 5.4" fill="none" stroke="#222" stroke-width="3.2" stroke-linecap="round" stroke-linejoin="round"/></svg><svg style="position:absolute;left:82px;top:1241px;" width="26" height="26" viewBox="0 0 26 26"><rect x="0.00" y="0.00" width="8.97" height="8.97" fill="#223049"/><rect x="8.67" y="0.00" width="8.97" height="8.97" fill="#a9c5e6"/><rect x="17.33" y="0.00" width="8.97" height="8.97" fill="#223049"/><rect x="0.00" y="8.67" width="8.97" height="8.97" fill="#a9c5e6"/><rect x="8.67" y="8.67" width="8.97" height="8.97" fill="#223049"/><rect x="17.33" y="8.67" width="8.97" height="8.97" fill="#a9c5e6"/><rect x="0.00" y="17.33" width="8.97" height="8.97" fill="#223049"/><rect x="8.67" y="17.33" width="8.97" height="8.97" fill="#a9c5e6"/></svg><div style="position:absolute;left:122.5px;top:1239.97px;height:33.36px;line-height:27.8px;font-size:27.8px;font-weight:bold;color:#1b1b1b;white-space:pre;letter-spacing:0.5px;">N07E079</div><svg style="position:absolute;left:0;top:0;overflow:visible" width="1" height="1"><polygon points="8.0,1281.5 8.0,1296.5 16.0,1289" fill="#555555"/></svg><svg style="position:absolute;left:39px;top:1276px;" width="27" height="27" viewBox="0 0 27 27"><rect x="0.75" y="0.75" width="25.5" height="25.5" fill="#fff" stroke="#b5b5b5" stroke-width="1.5"/><path d="M7.3 13.5 L11.9 21.1 L20.0 5.4" fill="none" stroke="#222" stroke-width="3.2" stroke-linecap="round" stroke-linejoin="round"/></svg><svg style="position:absolute;left:82px;top:1277px;" width="26" height="26" viewBox="0 0 26 26"><rect x="0.00" y="0.00" width="8.97" height="8.97" fill="#223049"/><rect x="8.67" y="0.00" width="8.97" height="8.97" fill="#a9c5e6"/><rect x="17.33" y="0.00" width="8.97" height="8.97" fill="#223049"/><rect x="0.00" y="8.67" width="8.97" height="8.97" fill="#a9c5e6"/><rect x="8.67" y="8.67" width="8.97" height="8.97" fill="#223049"/><rect x="17.33" y="8.67" width="8.97" height="8.97" fill="#a9c5e6"/><rect x="0.00" y="17.33" width="8.97" height="8.97" fill="#223049"/><rect x="8.67" y="17.33" width="8.97" height="8.97" fill="#a9c5e6"/></svg><div style="position:absolute;left:122.5px;top:1275.97px;height:33.36px;line-height:27.8px;font-size:27.8px;font-weight:bold;color:#1b1b1b;white-space:pre;letter-spacing:0.5px;">N06E081</div><svg style="position:absolute;left:0;top:0;overflow:visible" width="1" height="1"><polygon points="8.0,1317.5 8.0,1332.5 16.0,1325" fill="#555555"/></svg><svg style="position:absolute;left:39px;top:1312px;" width="27" height="27" viewBox="0 0 27 27"><rect x="0.75" y="0.75" width="25.5" height="25.5" fill="#fff" stroke="#b5b5b5" stroke-width="1.5"/><path d="M7.3 13.5 L11.9 21.1 L20.0 5.4" fill="none" stroke="#222" stroke-width="3.2" stroke-linecap="round" stroke-linejoin="round"/></svg><svg style="position:absolute;left:82px;top:1313px;" width="26" height="26" viewBox="0 0 26 26"><rect x="0.00" y="0.00" width="8.97" height="8.97" fill="#223049"/><rect x="8.67" y="0.00" width="8.97" height="8.97" fill="#a9c5e6"/><rect x="17.33" y="0.00" width="8.97" height="8.97" fill="#223049"/><rect x="0.00" y="8.67" width="8.97" height="8.97" fill="#a9c5e6"/><rect x="8.67" y="8.67" width="8.97" height="8.97" fill="#223049"/><rect x="17.33" y="8.67" width="8.97" height="8.97" fill="#a9c5e6"/><rect x="0.00" y="17.33" width="8.97" height="8.97" fill="#223049"/><rect x="8.67" y="17.33" width="8.97" height="8.97" fill="#a9c5e6"/></svg><div style="position:absolute;left:122.5px;top:1311.97px;height:33.36px;line-height:27.8px;font-size:27.8px;font-weight:bold;color:#1b1b1b;white-space:pre;letter-spacing:0.5px;">N06E080</div><svg style="position:absolute;left:0;top:0;overflow:visible" width="1" height="1"><polygon points="8.0,1353.5 8.0,1368.5 16.0,1361" fill="#555555"/></svg><svg style="position:absolute;left:39px;top:1348px;" width="27" height="27" viewBox="0 0 27 27"><rect x="0.75" y="0.75" width="25.5" height="25.5" fill="#fff" stroke="#b5b5b5" stroke-width="1.5"/><path d="M7.3 13.5 L11.9 21.1 L20.0 5.4" fill="none" stroke="#222" stroke-width="3.2" stroke-linecap="round" stroke-linejoin="round"/></svg><svg style="position:absolute;left:82px;top:1349px;" width="26" height="26" viewBox="0 0 26 26"><rect x="0.00" y="0.00" width="8.97" height="8.97" fill="#223049"/><rect x="8.67" y="0.00" width="8.97" height="8.97" fill="#a9c5e6"/><rect x="17.33" y="0.00" width="8.97" height="8.97" fill="#223049"/><rect x="0.00" y="8.67" width="8.97" height="8.97" fill="#a9c5e6"/><rect x="8.67" y="8.67" width="8.97" height="8.97" fill="#223049"/><rect x="17.33" y="8.67" width="8.97" height="8.97" fill="#a9c5e6"/><rect x="0.00" y="17.33" width="8.97" height="8.97" fill="#223049"/><rect x="8.67" y="17.33" width="8.97" height="8.97" fill="#a9c5e6"/></svg><div style="position:absolute;left:122.5px;top:1347.97px;height:33.36px;line-height:27.8px;font-size:27.8px;font-weight:bold;color:#1b1b1b;white-space:pre;letter-spacing:0.5px;">N06E079</div><svg style="position:absolute;left:0;top:0;overflow:visible" width="1" height="1"><polygon points="8.0,1389.5 8.0,1404.5 16.0,1397" fill="#555555"/></svg><svg style="position:absolute;left:39px;top:1384px;" width="27" height="27" viewBox="0 0 27 27"><rect x="0.75" y="0.75" width="25.5" height="25.5" fill="#fff" stroke="#b5b5b5" stroke-width="1.5"/><path d="M7.3 13.5 L11.9 21.1 L20.0 5.4" fill="none" stroke="#222" stroke-width="3.2" stroke-linecap="round" stroke-linejoin="round"/></svg><svg style="position:absolute;left:82px;top:1385px;" width="26" height="26" viewBox="0 0 26 26"><rect x="0.00" y="0.00" width="8.97" height="8.97" fill="#223049"/><rect x="8.67" y="0.00" width="8.97" height="8.97" fill="#a9c5e6"/><rect x="17.33" y="0.00" width="8.97" height="8.97" fill="#223049"/><rect x="0.00" y="8.67" width="8.97" height="8.97" fill="#a9c5e6"/><rect x="8.67" y="8.67" width="8.97" height="8.97" fill="#223049"/><rect x="17.33" y="8.67" width="8.97" height="8.97" fill="#a9c5e6"/><rect x="0.00" y="17.33" width="8.97" height="8.97" fill="#223049"/><rect x="8.67" y="17.33" width="8.97" height="8.97" fill="#a9c5e6"/></svg><div style="position:absolute;left:122.5px;top:1383.97px;height:33.36px;line-height:27.8px;font-size:27.8px;font-weight:bold;color:#1b1b1b;white-space:pre;letter-spacing:0.5px;">N05E080</div><svg style="position:absolute;left:476px;top:985px;" width="32" height="32" viewBox="0 0 32 32"><rect x="0.5" y="0.5" width="31" height="31" rx="3" fill="#f6f6f6" stroke="#dcdcdc"/><rect x="5" y="10" width="22" height="12" rx="2" fill="none" stroke="#6d6d6d" stroke-width="1.8"/><path d="M8 7 V10 M12 7 V10 M16 7 V10 M20 7 V10 M24 7 V10 M8 22 V25 M12 22 V25 M16 22 V25 M20 22 V25 M24 22 V25" stroke="#6d6d6d" stroke-width="1.5"/></svg><div style="position:absolute;left:0px;top:1430px;width:425px;height:46px;background:#ffffff;border:1.5px solid #ababab;border-radius:6px;"></div><svg style="position:absolute;left:16px;top:1440px;" width="26" height="26" viewBox="0 0 26 26"><circle cx="10" cy="10" r="7.5" fill="none" stroke="#838383" stroke-width="2.2"/><path d="M15.5 15.5 L22 22" stroke="#838383" stroke-width="2.6" stroke-linecap="round"/></svg><div style="position:absolute;left:57px;top:1441.68px;height:28.799999999999997px;line-height:24px;font-size:24px;font-weight:normal;color:#838383;white-space:pre;letter-spacing:1.45px;">Type to locate (⌘K)</div><div style="position:absolute;left:440px;top:1430px;width:47px;height:46px;overflow:hidden;"><div style="position:absolute;left:3px;top:12.53px;height:27.599999999999998px;line-height:23px;font-size:23px;font-weight:normal;color:#1e1e1e;white-space:pre;">1 legend entries</div></div><div style="position:absolute;left:505px;top:1442.53px;height:27.599999999999998px;line-height:23px;font-size:23px;font-weight:normal;color:#1e1e1e;white-space:pre;">Coordinate</div><div style="position:absolute;left:627px;top:1432px;width:180px;height:43px;background:#ffffff;border:1.5px solid #ababab;border-radius:5px;"></div><div style="position:absolute;left:640px;top:1442.53px;height:27.599999999999998px;line-height:23px;font-size:23px;font-weight:normal;color:#1e1e1e;white-space:pre;letter-spacing:0.05px;">7.721°,76.714°</div><svg style="position:absolute;left:808px;top:1430px;" width="48" height="46" viewBox="0 0 48 46"><g transform="rotate(-33 25 23)"><rect x="17.5" y="9" width="20" height="31" rx="10" fill="#b8aeae"/></g><g transform="rotate(-33 23 22)"><rect x="13" y="7" width="20" height="31" rx="10" fill="#fff" stroke="#000" stroke-width="2.4"/><path d="M13.5 22 C18 25 28 25 32.5 22" fill="none" stroke="#000" stroke-width="2.2"/><path d="M22.5 10 V18" stroke="#2a1f1f" stroke-width="3.4" stroke-linecap="round"/><path d="M23 7 V22" stroke="#000" stroke-width="1.6"/><circle cx="23" cy="30" r="2.6" fill="none" stroke="#000" stroke-width="1.8"/></g><circle cx="9.7" cy="27.7" r="1.3"/><circle cx="12.5" cy="24.6" r="1.3"/><circle cx="29" cy="13" r="1.3"/><circle cx="33.2" cy="12.5" r="1.3"/><circle cx="36.3" cy="9.3" r="1.5"/></svg><div style="position:absolute;left:874px;top:1442.53px;height:27.599999999999998px;line-height:23px;font-size:23px;font-weight:normal;color:#1e1e1e;white-space:pre;">Scale</div><div style="position:absolute;left:939px;top:1430px;width:184px;height:46px;background:#ffffff;border:1.5px solid #ababab;border-radius:5px;"></div><div style="position:absolute;left:1082px;top:1432px;width:39px;height:42px;background:linear-gradient(#fafafa,#efefef);border-left:1px solid #c8c8c8;border-radius:0 5px 5px 0;"></div><svg style="position:absolute;left:0;top:0;overflow:visible" width="1" height="1"><polygon points="1092.5,1447.5 1109.5,1447.5 1101,1456.5" fill="#5d5d5d"/></svg><div style="position:absolute;left:946px;top:1442.53px;height:27.599999999999998px;line-height:23px;font-size:23px;font-weight:normal;color:#1e1e1e;white-space:pre;letter-spacing:0.3px;">1:2647214</div><svg style="position:absolute;left:1147px;top:1439px;" width="26" height="31" viewBox="0 0 26 31"><path d="M6 14 V9 A7 7 0 0 1 20 9 V14" fill="none" stroke="#6b6b6b" stroke-width="3"/><rect x="1" y="13" width="24" height="17" rx="3" fill="#6b6b6b"/></svg><div style="position:absolute;left:1191px;top:1442.53px;height:27.599999999999998px;line-height:23px;font-size:23px;font-weight:normal;color:#1e1e1e;white-space:pre;">Magnifier</div><div style="position:absolute;left:1297px;top:1432px;width:184px;height:44px;background:#ffffff;border:1.5px solid #ababab;border-radius:5px;"></div><div style="position:absolute;left:1451px;top:1434px;width:28px;height:40px;background:linear-gradient(#fafafa,#efefef);border-left:1px solid #c8c8c8;border-radius:0 5px 5px 0;"></div><svg style="position:absolute;left:0;top:0;overflow:visible" width="1" height="1"><polygon points="1458.5,1450.0 1473.5,1450.0 1466,1442.0" fill="#5d5d5d"/></svg><svg style="position:absolute;left:0;top:0;overflow:visible" width="1" height="1"><polygon points="1458.5,1458.0 1473.5,1458.0 1466,1466.0" fill="#5d5d5d"/></svg><div style="position:absolute;left:1307px;top:1442.53px;height:27.599999999999998px;line-height:23px;font-size:23px;font-weight:normal;color:#1e1e1e;white-space:pre;">100%</div><div style="position:absolute;left:1501px;top:1442.53px;height:27.599999999999998px;line-height:23px;font-size:23px;font-weight:normal;color:#1e1e1e;white-space:pre;">Rotation</div><div style="position:absolute;left:1607px;top:1432px;width:184px;height:44px;background:#ffffff;border:1.5px solid #ababab;border-radius:5px;"></div><div style="position:absolute;left:1761px;top:1434px;width:28px;height:40px;background:linear-gradient(#fafafa,#efefef);border-left:1px solid #c8c8c8;border-radius:0 5px 5px 0;"></div><svg style="position:absolute;left:0;top:0;overflow:visible" width="1" height="1"><polygon points="1768.5,1450.0 1783.5,1450.0 1776,1442.0" fill="#5d5d5d"/></svg><svg style="position:absolute;left:0;top:0;overflow:visible" width="1" height="1"><polygon points="1768.5,1458.0 1783.5,1458.0 1776,1466.0" fill="#5d5d5d"/></svg><div style="position:absolute;left:1617px;top:1442.53px;height:27.599999999999998px;line-height:23px;font-size:23px;font-weight:normal;color:#1e1e1e;white-space:pre;letter-spacing:0.4px;">0.0 °</div><svg style="position:absolute;left:1804px;top:1439px;" width="28" height="28" viewBox="0 0 28 28"><rect x="0.75" y="0.75" width="26.5" height="26.5" fill="#fff" stroke="#b5b5b5" stroke-width="1.5"/><path d="M7.6 14.0 L12.3 21.8 L20.7 5.6" fill="none" stroke="#222" stroke-width="3.2" stroke-linecap="round" stroke-linejoin="round"/></svg><div style="position:absolute;left:1843px;top:1442.53px;height:27.599999999999998px;line-height:23px;font-size:23px;font-weight:normal;color:#1e1e1e;white-space:pre;letter-spacing:-0.4px;">Render</div><svg style="position:absolute;left:1948px;top:1438px;" width="32" height="30" viewBox="0 0 32 30"><g fill="none" stroke="#777" stroke-width="1.6"><ellipse cx="16" cy="15" rx="14" ry="13"/><ellipse cx="16" cy="15" rx="6" ry="13"/><path d="M16 2 V28 M3 10 H29 M2 16 H30 M4 22 H28"/></g></svg><div style="position:absolute;left:1985px;top:1442.53px;height:27.599999999999998px;line-height:23px;font-size:23px;font-weight:normal;color:#111111;white-space:pre;letter-spacing:-0.2px;">EPSG:4326</div><svg style="position:absolute;left:0;top:0" width="2119" height="280" viewBox="0 0 2119 280"><rect x="0" y="68" width="2.4" height="2.4" fill="#c6c6c6"/><rect x="6" y="68" width="2.4" height="2.4" fill="#c6c6c6"/><rect x="0" y="74" width="2.4" height="2.4" fill="#c6c6c6"/><rect x="6" y="74" width="2.4" height="2.4" fill="#c6c6c6"/><rect x="0" y="80" width="2.4" height="2.4" fill="#c6c6c6"/><rect x="6" y="80" width="2.4" height="2.4" fill="#c6c6c6"/><rect x="0" y="86" width="2.4" height="2.4" fill="#c6c6c6"/><rect x="6" y="86" width="2.4" height="2.4" fill="#c6c6c6"/><rect x="0" y="92" width="2.4" height="2.4" fill="#c6c6c6"/><rect x="6" y="92" width="2.4" height="2.4" fill="#c6c6c6"/><rect x="0" y="98" width="2.4" height="2.4" fill="#c6c6c6"/><rect x="6" y="98" width="2.4" height="2.4" fill="#c6c6c6"/><path d="M33 62 H53.5 L63.5 72 V104 H33 Z" fill="#fff" stroke="#6f6f6f" stroke-width="1.8" stroke-linejoin="miter"/><path d="M53.5 62 V72 H63.5" fill="#f0f0f0" stroke="#6f6f6f" stroke-width="1.8"/><path d="M92 99.5 V65.5 H105.5 V70 H130 V75" fill="#fdd94f" stroke="#c6a735" stroke-width="1.6" stroke-linejoin="round"/><path d="M92 99.5 L98.5 75 H136 L129.5 99.5 Z" fill="#fdd94f" stroke="#c6a735" stroke-width="1.6" stroke-linejoin="round"/><rect x="160.8" y="61.6" width="38.6" height="41.4" rx="4" fill="#6b9bcd" stroke="#3f6591" stroke-width="1.5"/><rect x="166.5" y="63" width="27.5" height="17.8" rx="1.5" fill="#f0f0f0" stroke="#8a8a8a" stroke-width="1"/><path d="M169.5 68 H191 M169.5 72 H191 M169.5 76 H191" stroke="#555" stroke-width="1.5"/><rect x="168" y="88" width="24" height="14" fill="#e8e8e8" stroke="#7a7a7a" stroke-width="1.2"/><rect x="171" y="91" width="5.5" height="7" fill="#3f5f85"/><path d="M224.5 63.5 H257.5 L267.5 73.5 V102.5 H224.5 Z" fill="#fff" stroke="#707070" stroke-width="1.8" stroke-linejoin="miter"/><path d="M257.5 63.5 V73.5 H267.5" fill="#f0f0f0" stroke="#707070" stroke-width="1.8"/><rect x="229" y="67" width="34" height="32" fill="none" stroke="#c6d6f5" stroke-width="1.5"/><path d="M228.5 65.5 H247.5 V77 H238.5 V104.5 H228.5 Z" fill="#fde37f" stroke="#d5a900" stroke-width="1.6"/><path d="M229 76 H232 M229 80 H232 M229 84 H232 M229 88 H232 M229 92 H232 M229 96 H232" stroke="#b08a00" stroke-width="1.4"/><rect x="248" y="85" width="22" height="22" rx="4" fill="#c9a100"/><rect x="249" y="89" width="20" height="7.3" fill="#dcc252" opacity="0.7"/><path d="M259.0 96.0 L259.0 88.0 M259.0 96.0 L252.1 92.0 M259.0 96.0 L252.1 100.0 M259.0 96.0 L259.0 104.0 M259.0 96.0 L265.9 100.0 M259.0 96.0 L265.9 92.0 " stroke="#fff" stroke-width="2.4"/><circle cx="259.0" cy="96.0" r="3.6" fill="#fff"/><circle cx="259.0" cy="96.0" r="1.6" fill="#c9a100"/><path d="M290.5 63.5 H323.5 L333.5 73.5 V102.5 H290.5 Z" fill="#fff" stroke="#707070" stroke-width="1.8" stroke-linejoin="miter"/><path d="M323.5 63.5 V73.5 H333.5" fill="#f0f0f0" stroke="#707070" stroke-width="1.8"/><rect x="295" y="68" width="34" height="30" fill="none" stroke="#c6d6f5" stroke-width="1.5"/><path d="M316 84 L332.5 102.5" stroke="#2b2b2b" stroke-width="8" stroke-linecap="round"/><path d="M316 84 L332.5 102.5" stroke="#e9d27c" stroke-width="5" stroke-linecap="round"/><path d="M319.5 88 L323 86" stroke="#2b2b2b" stroke-width="1.4"/><circle cx="331.5" cy="101.5" r="1.8" fill="#555"/><path d="M309 72.05 A8.5 8.5 0 1 1 304.05 77 L308.82 81.76 L313.76 76.82 Z" fill="#ececec" stroke="#2b2b2b" stroke-width="1.6" stroke-linejoin="round"/><circle cx="367" cy="72" r="8.3" fill="#d56b35" stroke="#8a3e17" stroke-width="1.3"/><line x1="383" y1="80.5" x2="395.5" y2="67.5" stroke="#3d5f87" stroke-width="5" stroke-linecap="round"/><line x1="383" y1="80.5" x2="395.5" y2="67.5" stroke="#6c9bd0" stroke-width="3" stroke-linecap="round"/><rect x="358.8" y="85.3" width="16.8" height="17.3" fill="#8cb38f" stroke="#4e8a52" stroke-width="1.3"/><text x="382" y="101" font-family="Liberation Sans" font-size="20" fill="#333">a</text><rect x="429" y="67" width="2.4" height="2.4" fill="#c6c6c6"/><rect x="435" y="67" width="2.4" height="2.4" fill="#c6c6c6"/><rect x="429" y="73" width="2.4" height="2.4" fill="#c6c6c6"/><rect x="435" y="73" width="2.4" height="2.4" fill="#c6c6c6"/><rect x="429" y="79" width="2.4" height="2.4" fill="#c6c6c6"/><rect x="435" y="79" width="2.4" height="2.4" fill="#c6c6c6"/><rect x="429" y="85" width="2.4" height="2.4" fill="#c6c6c6"/><rect x="435" y="85" width="2.4" height="2.4" fill="#c6c6c6"/><rect x="429" y="91" width="2.4" height="2.4" fill="#c6c6c6"/><rect x="435" y="91" width="2.4" height="2.4" fill="#c6c6c6"/><rect x="429" y="97" width="2.4" height="2.4" fill="#c6c6c6"/><rect x="435" y="97" width="2.4" height="2.4" fill="#c6c6c6"/><rect x="445.5" y="54" width="61.5" height="60" rx="5" fill="#d8d8d8" stroke="#a9a9a9" stroke-width="2"/><path d="M472.5 104 C471 99 467 94 464.5 89.3 C462 85 461 79 460.2 76 C459.5 72 464 70.5 466.5 74 L469.4 79.5 V62 C469.4 58 475.6 58 475.6 62 V76 V64 C475.6 60.5 482.3 60.5 482.3 64 V75.5 V68 C482.3 64.5 488.5 64.5 488.5 68 V77 V72 C488.5 68.5 494 68.5 494 72 V85 L489 104 Z" fill="#fff" stroke="#111" stroke-width="2" stroke-linejoin="round"/><rect x="522" y="63" width="28" height="27.5" fill="#e3e1da" stroke="#d6d4cd" stroke-width="1.5"/><path d="M542 60 L551 69 H546 V77 H538 V69 H533 Z M542 106 L551 97 H546 V89 H538 V97 H533 Z M519 83 L528 74 V79 H536 V87 H528 V92 Z M565 83 L556 74 V79 H548 V87 H556 V92 Z" fill="#d5d8db" stroke="#c8cbce" stroke-width="1"/><line x1="602.6" y1="89.6" x2="589" y2="105" stroke="#3a3a3a" stroke-width="6.8" stroke-linecap="butt"/><line x1="597.9" y1="94.8" x2="590.2" y2="103.6" stroke="#f3c300" stroke-width="3.4"/><circle cx="600.2" cy="92.3" r="2" fill="#000"/><circle cx="613" cy="77.7" r="15.8" fill="#ececec" stroke="#5a5a5a" stroke-width="2"/><path d="M602.9 76.0 A10.9 10.9 0 0 1 616.4 66.3" fill="none" stroke="#fff" stroke-width="2" opacity="0.8"/><path d="M602.5 77.7 H623.5 M613 67.5 V88" stroke="#3e6390" stroke-width="5.6" stroke-linecap="round"/><path d="M602.5 77.7 H623.5 M613 67.5 V88" stroke="#6b9bcd" stroke-width="3.2" stroke-linecap="round"/><line x1="668.6" y1="89.6" x2="655" y2="105" stroke="#3a3a3a" stroke-width="6.8" stroke-linecap="butt"/><line x1="663.9" y1="94.8" x2="656.2" y2="103.6" stroke="#f3c300" stroke-width="3.4"/><circle cx="666.2" cy="92.3" r="2" fill="#000"/><circle cx="679" cy="77.7" r="15.8" fill="#ececec" stroke="#5a5a5a" stroke-width="2"/><path d="M668.9 76.0 A10.9 10.9 0 0 1 682.4 66.3" fill="none" stroke="#fff" stroke-width="2" opacity="0.8"/><path d="M668.5 77.7 H689.5" stroke="#3e6390" stroke-width="5.6" stroke-linecap="round"/><path d="M668.5 77.7 H689.5" stroke="#6b9bcd" stroke-width="3.2" stroke-linecap="round"/><line x1="734.6" y1="88.8" x2="718" y2="106" stroke="#3a3a3a" stroke-width="6.8" stroke-linecap="butt"/><line x1="729.7" y1="93.8" x2="719.2" y2="104.7" stroke="#f3c300" stroke-width="3.4"/><circle cx="732.1" cy="91.4" r="2" fill="#000"/><circle cx="745" cy="78" r="15" fill="#ececec" stroke="#5a5a5a" stroke-width="2"/><path d="M735.4 76.4 A10.4 10.4 0 0 1 748.2 67.1" fill="none" stroke="#fff" stroke-width="2" opacity="0.8"/><path d="M724 59.5 h13 l-4 4 l8 8 l-5 5 l-8 -8 l-4 4 Z" fill="#6b9bcd" stroke="#3e6390" stroke-width="1.4" stroke-linejoin="round"/><path d="M764 59.5 h-13 l4 4 l-8 8 l5 5 l8 -8 l4 4 Z" fill="#6b9bcd" stroke="#3e6390" stroke-width="1.4" stroke-linejoin="round"/><path d="M764 99.5 h-13 l4 -4 l-8 -8 l5 -5 l8 8 l4 -4 Z" fill="#6b9bcd" stroke="#3e6390" stroke-width="1.4" stroke-linejoin="round"/><rect x="786.5" y="63.5" width="16" height="27" fill="#e4e2db" stroke="#d6d4cd" stroke-width="1.5"/><line x1="801.1" y1="88.0" x2="784" y2="106" stroke="#cfcfcf" stroke-width="6.8" stroke-linecap="butt"/><line x1="796.3" y1="93.0" x2="785.2" y2="104.7" stroke="#e6e6e0" stroke-width="3.4"/><circle cx="812" cy="76.5" r="15.8" fill="#eeeeee" stroke="#cdcdcd" stroke-width="2"/><path d="M801.9 74.8 A10.9 10.9 0 0 1 815.4 65.1" fill="none" stroke="#fff" stroke-width="2" opacity="0.8"/><rect x="852.5" y="63.5" width="26" height="27" fill="#ececec" stroke="#8a8a8a" stroke-width="1.5"/><line x1="867.0" y1="88.1" x2="850" y2="106" stroke="#3a3a3a" stroke-width="6.8" stroke-linecap="butt"/><line x1="862.2" y1="93.2" x2="851.2" y2="104.7" stroke="#f3c300" stroke-width="3.4"/><circle cx="864.5" cy="90.7" r="2" fill="#000"/><circle cx="878" cy="76.5" r="16" fill="#ececec" stroke="#5a5a5a" stroke-width="2"/><path d="M867.8 74.8 A11.1 11.1 0 0 1 881.4 64.9" fill="none" stroke="#fff" stroke-width="2" opacity="0.8"/><rect x="918.5" y="63.5" width="26" height="27" fill="#ececec" stroke="#8a8a8a" stroke-width="1.5"/><line x1="932.0" y1="89.4" x2="916" y2="106" stroke="#3a3a3a" stroke-width="6.8" stroke-linecap="butt"/><line x1="927.2" y1="94.4" x2="917.2" y2="104.7" stroke="#f3c300" stroke-width="3.4"/><circle cx="929.5" cy="92.0" r="2" fill="#000"/><circle cx="943" cy="78" r="15.8" fill="#ececec" stroke="#5a5a5a" stroke-width="2"/><path d="M932.9 76.3 A10.9 10.9 0 0 1 946.4 66.6" fill="none" stroke="#fff" stroke-width="2" opacity="0.8"/><text x="943.5" y="86" text-anchor="middle" font-family="Liberation Sans" font-weight="bold" font-size="19" letter-spacing="-1" fill="#222">1:1</text><line x1="998.3" y1="88.2" x2="982" y2="106" stroke="#3a3a3a" stroke-width="6.8" stroke-linecap="butt"/><line x1="993.6" y1="93.3" x2="983.2" y2="104.7" stroke="#f3c300" stroke-width="3.4"/><circle cx="995.9" cy="90.8" r="2" fill="#000"/><circle cx="1009" cy="76.5" r="15.8" fill="#ececec" stroke="#5a5a5a" stroke-width="2"/><path d="M998.9 74.8 A10.9 10.9 0 0 1 1012.4 65.1" fill="none" stroke="#fff" stroke-width="2" opacity="0.8"/><rect x="1006" y="85" width="21" height="21" rx="2" fill="#6b9bcd" stroke="#3e6390" stroke-width="1"/><path d="M1020 90 L1012 95.5 L1020 101" fill="none" stroke="#fff" stroke-width="3" stroke-linecap="round" stroke-linejoin="round"/><line x1="1064.2" y1="88.6" x2="1048" y2="106" stroke="#d2d2d2" stroke-width="6.8" stroke-linecap="butt"/><line x1="1059.5" y1="93.7" x2="1049.2" y2="104.7" stroke="#e9e7de" stroke-width="3.4"/><circle cx="1075" cy="77" r="15.8" fill="#efefef" stroke="#cfcfcf" stroke-width="2"/><path d="M1064.9 75.3 A10.9 10.9 0 0 1 1078.4 65.6" fill="none" stroke="#fff" stroke-width="2" opacity="0.8"/><rect x="1072" y="86" width="22" height="20" rx="2" fill="#d9dcdf" stroke="#c9cdd0" stroke-width="1"/><path d="M1079 91 L1087 96 L1079 101" fill="none" stroke="#f6f6f6" stroke-width="3" stroke-linecap="round"/><defs><linearGradient id="sg1117" x1="0" x2="1"><stop offset="0" stop-color="#c8c8c8"/><stop offset="0.5" stop-color="#ececec"/><stop offset="1" stop-color="#dcdcdc"/></linearGradient></defs><path d="M1123 64 H1156 V102.5 H1123 Z" fill="url(#sg1117)" stroke="#8f8f8f" stroke-width="1.6"/><path d="M1118 66 A5 5 0 0 1 1128 66 V97.5 A5 5 0 0 0 1118 97.5 Z" fill="#e8e8e8" stroke="#8f8f8f" stroke-width="1.6"/><path d="M1118 97.5 A5 5 0 0 0 1123 102.5" fill="none" stroke="#8f8f8f" stroke-width="1.6"/><rect x="1138" y="85" width="22" height="22" rx="4" fill="#c9a100"/><rect x="1139" y="89" width="20" height="7.3" fill="#dcc252" opacity="0.7"/><path d="M1149.0 96.0 L1149.0 88.0 M1149.0 96.0 L1142.1 92.0 M1149.0 96.0 L1142.1 100.0 M1149.0 96.0 L1149.0 104.0 M1149.0 96.0 L1155.9 100.0 M1149.0 96.0 L1155.9 92.0 " stroke="#fff" stroke-width="2.4"/><circle cx="1149.0" cy="96.0" r="3.6" fill="#fff"/><circle cx="1149.0" cy="96.0" r="1.6" fill="#c9a100"/><path d="M1180 96 L1188 72 L1200 67 L1221 68 L1222 100 L1202 91 Z" fill="#e2e2e2" stroke="#9a9a9a" stroke-width="1.6" stroke-linejoin="round"/><path d="M1186 80 L1210 78 L1221 83 M1191 72 L1195 92 M1204 68 L1207 95 M1183 88 L1214 86" fill="none" stroke="#a8a8a8" stroke-width="1"/><rect x="1204" y="85" width="22" height="22" rx="4" fill="#c9a100"/><rect x="1205" y="89" width="20" height="7.3" fill="#dcc252" opacity="0.7"/><path d="M1215.0 96.0 L1215.0 88.0 M1215.0 96.0 L1208.1 92.0 M1215.0 96.0 L1208.1 100.0 M1215.0 96.0 L1215.0 104.0 M1215.0 96.0 L1221.9 100.0 M1215.0 96.0 L1221.9 92.0 " stroke="#fff" stroke-width="2.4"/><circle cx="1215.0" cy="96.0" r="3.6" fill="#fff"/><circle cx="1215.0" cy="96.0" r="1.6" fill="#c9a100"/><path d="M1258.5 61.5 H1278 V95 L1268 103 L1258.5 95 Z" fill="#6b9bcd" stroke="#3e6390" stroke-width="1.6"/><rect x="1270" y="85" width="22" height="22" rx="4" fill="#c9a100"/><rect x="1271" y="89" width="20" height="7.3" fill="#dcc252" opacity="0.7"/><path d="M1281.0 96.0 L1281.0 88.0 M1281.0 96.0 L1274.1 92.0 M1281.0 96.0 L1274.1 100.0 M1281.0 96.0 L1281.0 104.0 M1281.0 96.0 L1287.9 100.0 M1281.0 96.0 L1287.9 92.0 " stroke="#fff" stroke-width="2.4"/><circle cx="1281.0" cy="96.0" r="3.6" fill="#fff"/><circle cx="1281.0" cy="96.0" r="1.6" fill="#c9a100"/><defs><linearGradient id="sg1314" x1="0" x2="1"><stop offset="0" stop-color="#c8c8c8"/><stop offset="0.5" stop-color="#ececec"/><stop offset="1" stop-color="#dcdcdc"/></linearGradient></defs><path d="M1320 64 H1354 V102.5 H1320 Z" fill="url(#sg1314)" stroke="#8f8f8f" stroke-width="1.6"/><path d="M1315 66 A5 5 0 0 1 1325 66 V97.5 A5 5 0 0 0 1315 97.5 Z" fill="#e8e8e8" stroke="#8f8f8f" stroke-width="1.6"/><path d="M1315 97.5 A5 5 0 0 0 1320 102.5" fill="none" stroke="#8f8f8f" stroke-width="1.6"/><path d="M1336 61 H1346 V79 L1341 83 L1336 79 Z" fill="#6b9bcd" stroke="#3e6390" stroke-width="1.3"/><circle cx="1400" cy="83" r="21" fill="#f0f0f0" stroke="#333" stroke-width="2"/><circle cx="1400.0" cy="66.0" r="1.4" fill="#2f4f7a"/><circle cx="1408.5" cy="68.3" r="1.4" fill="#6b9bcd"/><circle cx="1414.7" cy="74.5" r="1.4" fill="#6b9bcd"/><circle cx="1417.0" cy="83.0" r="1.4" fill="#2f4f7a"/><circle cx="1414.7" cy="91.5" r="1.4" fill="#6b9bcd"/><circle cx="1408.5" cy="97.7" r="1.4" fill="#6b9bcd"/><circle cx="1400.0" cy="100.0" r="1.4" fill="#2f4f7a"/><circle cx="1391.5" cy="97.7" r="1.4" fill="#6b9bcd"/><circle cx="1385.3" cy="91.5" r="1.4" fill="#6b9bcd"/><circle cx="1383.0" cy="83.0" r="1.4" fill="#2f4f7a"/><circle cx="1385.3" cy="74.5" r="1.4" fill="#6b9bcd"/><circle cx="1391.5" cy="68.3" r="1.4" fill="#6b9bcd"/><path d="M1400 67 V83 L1409 89" fill="none" stroke="#888" stroke-width="2.6" stroke-linecap="round"/><defs><linearGradient id="rf" x1="0" y1="0" x2="0" y2="1"><stop offset="0" stop-color="#8fb6e3"/><stop offset="1" stop-color="#3c78c0"/></linearGradient></defs><path d="M1446 84 C1446 66 1470 58 1480 70 L1486 62 V84 H1468 L1474 77 C1466 70 1452 72 1450 84 Z" fill="url(#rf)" stroke="#2e67b0" stroke-width="1"/><path d="M1486 82 C1486 100 1462 108 1452 96 L1446 104 V82 H1464 L1458 89 C1466 96 1480 94 1482 82 Z" fill="url(#rf)" stroke="#2e67b0" stroke-width="1"/><rect x="1516" y="67" width="2.4" height="2.4" fill="#c6c6c6"/><rect x="1522" y="67" width="2.4" height="2.4" fill="#c6c6c6"/><rect x="1516" y="73" width="2.4" height="2.4" fill="#c6c6c6"/><rect x="1522" y="73" width="2.4" height="2.4" fill="#c6c6c6"/><rect x="1516" y="79" width="2.4" height="2.4" fill="#c6c6c6"/><rect x="1522" y="79" width="2.4" height="2.4" fill="#c6c6c6"/><rect x="1516" y="85" width="2.4" height="2.4" fill="#c6c6c6"/><rect x="1522" y="85" width="2.4" height="2.4" fill="#c6c6c6"/><rect x="1516" y="91" width="2.4" height="2.4" fill="#c6c6c6"/><rect x="1522" y="91" width="2.4" height="2.4" fill="#c6c6c6"/><rect x="1516" y="97" width="2.4" height="2.4" fill="#c6c6c6"/><rect x="1522" y="97" width="2.4" height="2.4" fill="#c6c6c6"/><rect x="1542.5" y="61.5" width="44" height="39.5" fill="none" stroke="#c9c9c9" stroke-width="1.8" stroke-dasharray="4 3"/><rect x="1544" y="63.5" width="27.5" height="26.5" fill="#e3e1da" stroke="#d5d3cc" stroke-width="1.2"/><path d="M1560 76 L1585 89.5 L1577 92 L1586 102 L1581.5 106 L1573 96 L1567 102 Z" fill="#f7f7f7" stroke="#a9a9a9" stroke-width="1.4" stroke-linejoin="round"/><polygon points="1600.0,79.7 1616.0,79.7 1608,87.7" fill="#555"/><rect x="1648" y="75" width="26" height="27" fill="#e3e1da" stroke="#d5d3cc" stroke-width="1.3"/><rect x="1636.5" y="65.5" width="30" height="27" fill="#eeeeee" stroke="#d7d7d7" stroke-width="1.5"/><rect x="1640.5" y="69.5" width="22" height="6" fill="#f8f8f8" stroke="#d0d0d0" stroke-width="1.2"/><rect x="1640.5" y="79.5" width="22" height="6" fill="#f8f8f8" stroke="#d0d0d0" stroke-width="1.2"/><polygon points="1689.0,79.7 1705.0,79.7 1697,87.7" fill="#555"/><rect x="1724.5" y="63.5" width="27" height="27" fill="#fbe44f" stroke="#c9a400" stroke-width="1.6"/><rect x="1732.5" y="71.5" width="27" height="27" fill="#fbe44f" stroke="#c9a400" stroke-width="1.6"/><rect x="1746.5" y="85.5" width="21.5" height="21.5" rx="2" fill="#d8141c"/><circle cx="1757.2" cy="96.2" r="6.8" fill="#f0f0f0"/><path d="M1752 100.5 L1762 92" stroke="#d8141c" stroke-width="2.6"/><polygon points="1780.0,79.6 1796.0,79.6 1788,87.6" fill="#555"/><rect x="1814.5" y="63.5" width="27.5" height="27" fill="#fbe44f" stroke="#c9a400" stroke-width="1.6"/><path d="M1849 105 L1842.5 90 A7 7 0 1 1 1855.5 90 Z" fill="#7397b9" stroke="#53779c" stroke-width="1"/><circle cx="1849" cy="87" r="2.8" fill="#fff"/><polygon points="1870.0,79.6 1886.0,79.6 1878,87.6" fill="#555"/><rect x="1908" y="67" width="2.4" height="2.4" fill="#c6c6c6"/><rect x="1914" y="67" width="2.4" height="2.4" fill="#c6c6c6"/><rect x="1908" y="73" width="2.4" height="2.4" fill="#c6c6c6"/><rect x="1914" y="73" width="2.4" height="2.4" fill="#c6c6c6"/><rect x="1908" y="79" width="2.4" height="2.4" fill="#c6c6c6"/><rect x="1914" y="79" width="2.4" height="2.4" fill="#c6c6c6"/><rect x="1908" y="85" width="2.4" height="2.4" fill="#c6c6c6"/><rect x="1914" y="85" width="2.4" height="2.4" fill="#c6c6c6"/><rect x="1908" y="91" width="2.4" height="2.4" fill="#c6c6c6"/><rect x="1914" y="91" width="2.4" height="2.4" fill="#c6c6c6"/><rect x="1908" y="97" width="2.4" height="2.4" fill="#c6c6c6"/><rect x="1914" y="97" width="2.4" height="2.4" fill="#c6c6c6"/><defs><radialGradient id="ig" cx="0.4" cy="0.3" r="0.7"><stop offset="0" stop-color="#9fbde3"/><stop offset="1" stop-color="#5a86c0"/></radialGradient></defs><circle cx="1949" cy="77" r="16.5" fill="url(#ig)" stroke="#4e79b0" stroke-width="1"/><text x="1947" y="87" text-anchor="middle" font-family="Liberation Serif" font-style="italic" font-weight="bold" font-size="24" fill="#fff">i</text><path d="M1955.5 79 L1978.5 93 L1970 95 L1978 104 L1973.5 107.5 L1966 98.5 L1960.5 104 Z" fill="#fff" stroke="#111" stroke-width="1.6" stroke-linejoin="round"/><path d="M2003 63 V102 M2041 63 V102 M2001 104 H2043 M2003 68 H2041 M2003 80 H2041 M2003 92 H2041" stroke="#cfcfcf" stroke-width="2"/><rect x="2000.5" y="101.5" width="43" height="4" fill="#d3d3d3"/><circle cx="2017" cy="68" r="4" fill="#ebebeb" stroke="#cdcdcd" stroke-width="1.3"/><circle cx="2033" cy="68" r="4" fill="#ebebeb" stroke="#cdcdcd" stroke-width="1.3"/><circle cx="2013" cy="80" r="4" fill="#ebebeb" stroke="#cdcdcd" stroke-width="1.3"/><circle cx="2023" cy="80" r="4" fill="#ebebeb" stroke="#cdcdcd" stroke-width="1.3"/><circle cx="2013" cy="92" r="4" fill="#ebebeb" stroke="#cdcdcd" stroke-width="1.3"/><circle cx="2023" cy="92" r="4" fill="#ebebeb" stroke="#cdcdcd" stroke-width="1.3"/><circle cx="2033" cy="92" r="4" fill="#ebebeb" stroke="#cdcdcd" stroke-width="1.3"/><rect x="2083.8" y="60.599999999999994" width="8.4" height="10" rx="2" transform="rotate(0 2088 82.6)" fill="#8fb0dc" stroke="#3f77c2" stroke-width="1.6"/><rect x="2083.8" y="60.599999999999994" width="8.4" height="10" rx="2" transform="rotate(45 2088 82.6)" fill="#8fb0dc" stroke="#3f77c2" stroke-width="1.6"/><rect x="2083.8" y="60.599999999999994" width="8.4" height="10" rx="2" transform="rotate(90 2088 82.6)" fill="#8fb0dc" stroke="#3f77c2" stroke-width="1.6"/><rect x="2083.8" y="60.599999999999994" width="8.4" height="10" rx="2" transform="rotate(135 2088 82.6)" fill="#8fb0dc" stroke="#3f77c2" stroke-width="1.6"/><rect x="2083.8" y="60.599999999999994" width="8.4" height="10" rx="2" transform="rotate(180 2088 82.6)" fill="#8fb0dc" stroke="#3f77c2" stroke-width="1.6"/><rect x="2083.8" y="60.599999999999994" width="8.4" height="10" rx="2" transform="rotate(225 2088 82.6)" fill="#8fb0dc" stroke="#3f77c2" stroke-width="1.6"/><rect x="2083.8" y="60.599999999999994" width="8.4" height="10" rx="2" transform="rotate(270 2088 82.6)" fill="#8fb0dc" stroke="#3f77c2" stroke-width="1.6"/><rect x="2083.8" y="60.599999999999994" width="8.4" height="10" rx="2" transform="rotate(315 2088 82.6)" fill="#8fb0dc" stroke="#3f77c2" stroke-width="1.6"/><circle cx="2088" cy="82.6" r="15" fill="#8fb0dc" stroke="#3f77c2" stroke-width="1.6"/><circle cx="2088" cy="82.6" r="6" fill="#f4f4f4" stroke="#3f77c2" stroke-width="1.2"/><rect x="0" y="145" width="2.4" height="2.4" fill="#c6c6c6"/><rect x="6" y="145" width="2.4" height="2.4" fill="#c6c6c6"/><rect x="0" y="151" width="2.4" height="2.4" fill="#c6c6c6"/><rect x="6" y="151" width="2.4" height="2.4" fill="#c6c6c6"/><rect x="0" y="157" width="2.4" height="2.4" fill="#c6c6c6"/><rect x="6" y="157" width="2.4" height="2.4" fill="#c6c6c6"/><rect x="0" y="163" width="2.4" height="2.4" fill="#c6c6c6"/><rect x="6" y="163" width="2.4" height="2.4" fill="#c6c6c6"/><rect x="0" y="169" width="2.4" height="2.4" fill="#c6c6c6"/><rect x="6" y="169" width="2.4" height="2.4" fill="#c6c6c6"/><rect x="0" y="175" width="2.4" height="2.4" fill="#c6c6c6"/><rect x="6" y="175" width="2.4" height="2.4" fill="#c6c6c6"/><path d="M26 156 L46 147 L56 175 L36 184 Z" fill="#d9683a" stroke="#9c4a25" stroke-width="1.3"/><path d="M32 144 L52 140 L58 170 L38 174 Z" fill="#f0c22f" stroke="#a98a1f" stroke-width="1.3"/><path d="M44 137.5 L71.5 144 L66 170 L39 163 Z" fill="#6b9bcd" stroke="#3e6390" stroke-width="1.5"/><rect x="54" y="167.5" width="17.5" height="17" rx="3" fill="#5a9a5e" stroke="#3f7a45" stroke-width="1"/><path d="M57.5 176 H68 M62.7 170.8 V181.2" stroke="#fff" stroke-width="3.2"/><path d="M90.5 152.4 L98.4 148.1 H131.7 L137.6 152.6 L114.7 165.4 Z" fill="#a07e00" stroke="#111" stroke-width="1.4" stroke-linejoin="round"/><circle cx="114.7" cy="155" r="16.6" fill="#a9c6e6" stroke="#6a98cf" stroke-width="1.5"/><path d="M102.5 147 C104 143 108 141 111 142 C112 145 108 147 109 150 C110 153 106 155 104 153 C102 151 101 149 102.5 147 Z M105 158 C107 157 109 160 108 163 L106 164 Z M113 147 C116 144 121 143 125 145 C128 147 126 150 124 151 C121 152 122 156 120 157 C118 158 117 153 115 153 C112 153 111 150 113 147 Z M112.5 153.5 C115 152.5 118 155 117.5 159 C117 162 115.5 165 114.5 165 C113 162 111 157 112.5 153.5 Z" fill="#2f5782"/><path d="M90.5 152.4 L114.7 165.4 V184.5 L90.5 169 Z" fill="#d9ab00" stroke="#111" stroke-width="1.6" stroke-linejoin="round"/><path d="M114.7 165.4 L137.6 152.6 V168.4 L114.7 184.5 Z" fill="#fffd7a" stroke="#111" stroke-width="1.6" stroke-linejoin="round"/><rect x="120.4" y="167.2" width="17.5" height="17.5" rx="4" fill="#c9a100"/><rect x="121.4" y="171.2" width="15.5" height="5.8" fill="#dcc252" opacity="0.7"/><ellipse cx="129.2" cy="170.8" rx="1.7" ry="3.3" transform="rotate(0 129.2 170.8)" fill="#fff"/><ellipse cx="124.6" cy="173.3" rx="1.7" ry="3.3" transform="rotate(-60 124.6 173.3)" fill="#fff"/><ellipse cx="124.6" cy="178.5" rx="1.7" ry="3.3" transform="rotate(-120 124.6 178.5)" fill="#fff"/><ellipse cx="129.2" cy="181.1" rx="1.7" ry="3.3" transform="rotate(-180 129.2 181.1)" fill="#fff"/><ellipse cx="133.7" cy="178.5" rx="1.7" ry="3.3" transform="rotate(-240 133.7 178.5)" fill="#fff"/><ellipse cx="133.7" cy="173.3" rx="1.7" ry="3.3" transform="rotate(-300 133.7 173.3)" fill="#fff"/><circle cx="129.15" cy="175.95" r="1.8" fill="#fff"/><path d="M161.3 142 L174 171.5 L187 142 H199.5" fill="none" stroke="#2c3e55" stroke-width="3"/><circle cx="161.3" cy="142" r="3.3" fill="#fff" stroke="#2c3e55" stroke-width="2"/><circle cx="174" cy="171.5" r="3.3" fill="#fff" stroke="#2c3e55" stroke-width="2"/><circle cx="187" cy="142" r="3.3" fill="#fff" stroke="#2c3e55" stroke-width="2"/><circle cx="199.5" cy="142" r="3.3" fill="#fff" stroke="#2c3e55" stroke-width="2"/><rect x="186" y="167.5" width="18" height="18" rx="4" fill="#c9a100"/><rect x="187" y="171.5" width="16" height="5.9" fill="#dcc252" opacity="0.7"/><ellipse cx="195.0" cy="171.3" rx="1.7" ry="3.3" transform="rotate(0 195.0 171.3)" fill="#fff"/><ellipse cx="190.5" cy="173.9" rx="1.7" ry="3.3" transform="rotate(-60 190.5 173.9)" fill="#fff"/><ellipse cx="190.5" cy="179.1" rx="1.7" ry="3.3" transform="rotate(-120 190.5 179.1)" fill="#fff"/><ellipse cx="195.0" cy="181.7" rx="1.7" ry="3.3" transform="rotate(-180 195.0 181.7)" fill="#fff"/><ellipse cx="199.5" cy="179.1" rx="1.7" ry="3.3" transform="rotate(-240 199.5 179.1)" fill="#fff"/><ellipse cx="199.5" cy="173.9" rx="1.7" ry="3.3" transform="rotate(-300 199.5 173.9)" fill="#fff"/><circle cx="195.0" cy="176.5" r="1.8" fill="#fff"/><path d="M223.5 184 C230 165 245 147 267 137 C266 150 258 163 244 170 L236 171 C232 175 228 180 223.5 184 Z" fill="#8db3e0" stroke="#2c4d78" stroke-width="1.5" stroke-linejoin="round"/><path d="M234 168 L262 143 M238 162 L256 150 M232 172 L248 162" stroke="#fff" stroke-width="1" opacity="0.8"/><rect x="252" y="167.5" width="18" height="18" rx="4" fill="#c9a100"/><rect x="253" y="171.5" width="16" height="5.9" fill="#dcc252" opacity="0.7"/><ellipse cx="261.0" cy="171.3" rx="1.7" ry="3.3" transform="rotate(0 261.0 171.3)" fill="#fff"/><ellipse cx="256.5" cy="173.9" rx="1.7" ry="3.3" transform="rotate(-60 256.5 173.9)" fill="#fff"/><ellipse cx="256.5" cy="179.1" rx="1.7" ry="3.3" transform="rotate(-120 256.5 179.1)" fill="#fff"/><ellipse cx="261.0" cy="181.7" rx="1.7" ry="3.3" transform="rotate(-180 261.0 181.7)" fill="#fff"/><ellipse cx="265.5" cy="179.1" rx="1.7" ry="3.3" transform="rotate(-240 265.5 179.1)" fill="#fff"/><ellipse cx="265.5" cy="173.9" rx="1.7" ry="3.3" transform="rotate(-300 265.5 173.9)" fill="#fff"/><circle cx="261.0" cy="176.5" r="1.8" fill="#fff"/><rect x="294.5" y="149" width="37" height="21.5" rx="2.5" fill="#6b9bcd" stroke="#2c4d78" stroke-width="1.8"/><path d="M300 137 V149 M306 137 V149 M312 137 V149 M318 137 V149 M324 137 V149 M300 170.5 V177 M306 170.5 V177 M312 170.5 V177" stroke="#2c4d78" stroke-width="1.8"/><rect x="318" y="167.5" width="18" height="18" rx="4" fill="#c9a100"/><rect x="319" y="171.5" width="16" height="5.9" fill="#dcc252" opacity="0.7"/><ellipse cx="327.0" cy="171.3" rx="1.7" ry="3.3" transform="rotate(0 327.0 171.3)" fill="#fff"/><ellipse cx="322.5" cy="173.9" rx="1.7" ry="3.3" transform="rotate(-60 322.5 173.9)" fill="#fff"/><ellipse cx="322.5" cy="179.1" rx="1.7" ry="3.3" transform="rotate(-120 322.5 179.1)" fill="#fff"/><ellipse cx="327.0" cy="181.7" rx="1.7" ry="3.3" transform="rotate(-180 327.0 181.7)" fill="#fff"/><ellipse cx="331.5" cy="179.1" rx="1.7" ry="3.3" transform="rotate(-240 331.5 179.1)" fill="#fff"/><ellipse cx="331.5" cy="173.9" rx="1.7" ry="3.3" transform="rotate(-300 331.5 173.9)" fill="#fff"/><circle cx="327.0" cy="176.5" r="1.8" fill="#fff"/><rect x="356.5" y="139.5" width="43" height="43" fill="#6b9bcd" stroke="#213f66" stroke-width="2"/><path d="M356.5 161 H399.5 M378 139.5 V182.5 M356.5 171.5 H378 M367 161 V182.5 M356.5 139.5 L378 161 M378 139.5 L356.5 161 M399.5 139.5 L378 161" stroke="#213f66" stroke-width="1.8"/><rect x="358" y="141" width="19" height="19" fill="#a9c5e6" opacity="0.55"/><rect x="384" y="167" width="18" height="18" rx="4" fill="#c9a100"/><rect x="385" y="171" width="16" height="5.9" fill="#dcc252" opacity="0.7"/><ellipse cx="393.0" cy="170.8" rx="1.7" ry="3.3" transform="rotate(0 393.0 170.8)" fill="#fff"/><ellipse cx="388.5" cy="173.4" rx="1.7" ry="3.3" transform="rotate(-60 388.5 173.4)" fill="#fff"/><ellipse cx="388.5" cy="178.6" rx="1.7" ry="3.3" transform="rotate(-120 388.5 178.6)" fill="#fff"/><ellipse cx="393.0" cy="181.2" rx="1.7" ry="3.3" transform="rotate(-180 393.0 181.2)" fill="#fff"/><ellipse cx="397.5" cy="178.6" rx="1.7" ry="3.3" transform="rotate(-240 397.5 178.6)" fill="#fff"/><ellipse cx="397.5" cy="173.4" rx="1.7" ry="3.3" transform="rotate(-300 397.5 173.4)" fill="#fff"/><circle cx="393.0" cy="176.0" r="1.8" fill="#fff"/><defs><linearGradient id="vg" x1="0" y1="0" x2="1" y2="1"><stop offset="0" stop-color="#eef2f8"/><stop offset="1" stop-color="#94b2d8"/></linearGradient></defs><rect x="422.5" y="139.5" width="43" height="43" rx="4" fill="url(#vg)" stroke="#36557f" stroke-width="1.6"/><path d="M425 142 L437 171 L451 142 H464" fill="none" stroke="#36557f" stroke-width="2.4"/><circle cx="425" cy="142" r="3" fill="#fff" stroke="#36557f" stroke-width="1.8"/><circle cx="437" cy="171" r="3" fill="#fff" stroke="#36557f" stroke-width="1.8"/><circle cx="451" cy="142" r="3" fill="#fff" stroke="#36557f" stroke-width="1.8"/><circle cx="464" cy="142" r="3" fill="#fff" stroke="#36557f" stroke-width="1.8"/><rect x="450" y="167" width="18" height="18" rx="4" fill="#c9a100"/><rect x="451" y="171" width="16" height="5.9" fill="#dcc252" opacity="0.7"/><ellipse cx="459.0" cy="170.8" rx="1.7" ry="3.3" transform="rotate(0 459.0 170.8)" fill="#fff"/><ellipse cx="454.5" cy="173.4" rx="1.7" ry="3.3" transform="rotate(-60 454.5 173.4)" fill="#fff"/><ellipse cx="454.5" cy="178.6" rx="1.7" ry="3.3" transform="rotate(-120 454.5 178.6)" fill="#fff"/><ellipse cx="459.0" cy="181.2" rx="1.7" ry="3.3" transform="rotate(-180 459.0 181.2)" fill="#fff"/><ellipse cx="463.5" cy="178.6" rx="1.7" ry="3.3" transform="rotate(-240 463.5 178.6)" fill="#fff"/><ellipse cx="463.5" cy="173.4" rx="1.7" ry="3.3" transform="rotate(-300 463.5 173.4)" fill="#fff"/><circle cx="459.0" cy="176.0" r="1.8" fill="#fff"/><rect x="494" y="145" width="2.4" height="2.4" fill="#c6c6c6"/><rect x="500" y="145" width="2.4" height="2.4" fill="#c6c6c6"/><rect x="494" y="151" width="2.4" height="2.4" fill="#c6c6c6"/><rect x="500" y="151" width="2.4" height="2.4" fill="#c6c6c6"/><rect x="494" y="157" width="2.4" height="2.4" fill="#c6c6c6"/><rect x="500" y="157" width="2.4" height="2.4" fill="#c6c6c6"/><rect x="494" y="163" width="2.4" height="2.4" fill="#c6c6c6"/><rect x="500" y="163" width="2.4" height="2.4" fill="#c6c6c6"/><rect x="494" y="169" width="2.4" height="2.4" fill="#c6c6c6"/><rect x="500" y="169" width="2.4" height="2.4" fill="#c6c6c6"/><rect x="494" y="175" width="2.4" height="2.4" fill="#c6c6c6"/><rect x="500" y="175" width="2.4" height="2.4" fill="#c6c6c6"/><path d="M524 182 L533.7 175.2 L554.8 142.4 L547.2 137.6 L526.2 170.3 Z" fill="#dedad5" stroke="#cfcbc6" stroke-width="1.2" stroke-linejoin="round"/><path d="M524 182 L533.7 175.2 L526.2 170.3 Z" fill="#eeeeee" stroke="#cfcbc6" stroke-width="1"/><path d="M533 184 L543.1 177.1 L565.7 143.5 L558.3 138.5 L535.6 172.0 Z" fill="#dedad5" stroke="#cfcbc6" stroke-width="1.2" stroke-linejoin="round"/><path d="M533 184 L543.1 177.1 L535.6 172.0 Z" fill="#eeeeee" stroke="#cfcbc6" stroke-width="1"/><polygon points="556.0,178.4 572.0,178.4 564,186.4" fill="#555"/><path d="M593 184 L603.1 176.8 L625.8 142.5 L618.2 137.5 L595.6 171.8 Z" fill="#e4e3dc" stroke="#cfcbc6" stroke-width="1.2" stroke-linejoin="round"/><path d="M593 184 L603.1 176.8 L595.6 171.8 Z" fill="#eeeeee" stroke="#cfcbc6" stroke-width="1"/><rect x="652.5" y="139.5" width="39" height="39" rx="3" fill="#dddddd" stroke="#cfcfcf" stroke-width="1.2"/><rect x="658" y="141" width="27" height="13" fill="#f3f3f3"/><path d="M661 145 H682 M661 148.5 H682 M661 152 H682" stroke="#d0d0d0" stroke-width="1.2"/><rect x="662" y="165" width="20" height="13" fill="#efefef"/><path d="M678 184 L685.1 179.5 L699.9 156.9 L694.1 153.1 L679.3 175.7 Z" fill="#dedad5" stroke="#cfcbc6" stroke-width="1.2" stroke-linejoin="round"/><path d="M678 184 L685.1 179.5 L679.3 175.7 Z" fill="#eeeeee" stroke="#cfcbc6" stroke-width="1"/><path d="M724 177 L756 145" stroke="#d8ddd8" stroke-width="3" stroke-dasharray="4 3"/><rect x="720.5" y="173.5" width="7" height="7" fill="#e6e6e6" stroke="#cfcfcf" stroke-width="1.5"/><rect x="752.5" y="141.5" width="7" height="7" fill="#e6e6e6" stroke="#cfcfcf" stroke-width="1.5"/><polygon points="776.0,157.8 792.0,157.8 784,165.8" fill="#555"/><path d="M812 148 C808 140 820 138 832 142 C842 145 852 140 851.5 150 C851 158 843 158 832 157 C820 156 815 160 812 148 Z" fill="#dcdcdc" stroke="#c2c2c2" stroke-width="1.6"/><rect x="832" y="163" width="22" height="22" rx="4" fill="#c9c5bd"/><rect x="833" y="167" width="20" height="7.3" fill="#d8d5ce" opacity="0.7"/><path d="M843.0 174.0 L843.0 166.0 M843.0 174.0 L836.1 170.0 M843.0 174.0 L836.1 178.0 M843.0 174.0 L843.0 182.0 M843.0 174.0 L849.9 178.0 M843.0 174.0 L849.9 170.0 " stroke="#fff" stroke-width="2.4"/><circle cx="843.0" cy="174.0" r="3.6" fill="#fff"/><circle cx="843.0" cy="174.0" r="1.6" fill="#c9c5bd"/><rect x="877.5" y="138.5" width="10" height="10" fill="none" stroke="#c9c9c9" stroke-width="1.6"/><rect x="883.5" y="143.5" width="10" height="10" fill="none" stroke="#c9c9c9" stroke-width="1.6"/><path d="M889 143 H909 M893 148 H914 M883 153 L873 175 M888 155 L878 179" stroke="#cdcdcd" stroke-width="1.5"/><path d="M893 170 L910 183 M898 159 L916 178" stroke="#d6d3cc" stroke-width="5" stroke-linecap="round"/><path d="M893 158 C896 154 903 155 905 160 L897 166 Z" fill="#e0ddd6" stroke="#cfcbc4"/><polygon points="932.0,157.8 948.0,157.8 940,165.8" fill="#555"/><rect x="966.5" y="141" width="39" height="10" fill="#e2e0d8" stroke="#cfccc3" stroke-width="1.2"/><rect x="966.5" y="155" width="39" height="10" fill="#e2e0d8" stroke="#cfccc3" stroke-width="1.2"/><rect x="966.5" y="169" width="39" height="10" fill="#e2e0d8" stroke="#cfccc3" stroke-width="1.2"/><path d="M978 183 L987.5 176.0 L1009.3 143.2 L1002.7 138.8 L980.8 171.5 Z" fill="#dcd8d6" stroke="#c6c2bf" stroke-width="1.2" stroke-linejoin="round"/><path d="M978 183 L987.5 176.0 L980.8 171.5 Z" fill="#eeeeee" stroke="#c6c2bf" stroke-width="1"/><rect x="1032.5" y="141" width="27" height="27" fill="#e2e0d8" stroke="#cfccc3" stroke-width="1.2"/><path d="M1035 147 H1067" stroke="#d6c8c8" stroke-width="3.5" stroke-linecap="round"/><path d="M1036 153 H1067 L1064 183 H1039 Z" fill="#ebe3e3" stroke="#d2c5c5" stroke-width="2"/><path d="M1045 156 V180 M1051.5 156 V180 M1058 156 V180" stroke="#d8cccc" stroke-width="1.5"/><path d="M1096 158 L1125 163 L1102 149 Z" fill="#ebebeb" stroke="#cfcfcf" stroke-width="1.2"/><path d="M1099 160 L1124 158" stroke="#d0d0d0" stroke-width="2"/><ellipse cx="1134" cy="153" rx="6" ry="4" fill="none" stroke="#c8bebe" stroke-width="2.4" transform="rotate(-30 1134 153)"/><ellipse cx="1132" cy="170" rx="4" ry="6" fill="none" stroke="#c8bebe" stroke-width="2.4" transform="rotate(-30 1132 170)"/><path d="M1124 158 L1129 155 M1124 160 L1130 166" stroke="#c8bebe" stroke-width="2"/><path d="M1176 141 H1192.5 L1199.5 148 V172.5 H1176 Z" fill="#f4f4f4" stroke="#dedede" stroke-width="1.6" stroke-linejoin="miter"/><path d="M1192.5 141 V148 H1199.5" fill="#f0f0f0" stroke="#dedede" stroke-width="1.6"/><path d="M1168.5 149.5 H1184.5 L1191.5 156.5 V180.5 H1168.5 Z" fill="#f6f6f6" stroke="#c9c9c9" stroke-width="2" stroke-linejoin="miter"/><path d="M1184.5 149.5 V156.5 H1191.5" fill="#f0f0f0" stroke="#c9c9c9" stroke-width="2"/><path d="M1172 160 H1186 M1172 164 H1186 M1172 168 H1182 M1172 172 H1186 M1172 176 H1186" stroke="#d2d2d2" stroke-width="1.5"/><rect x="1234.5" y="141" width="31" height="39.5" fill="#edeae6" stroke="#d2cfca" stroke-width="1.6"/><path d="M1238.5 148 H1254.5 L1261.5 155 V176 H1238.5 Z" fill="#f6f6f6" stroke="#c9c9c9" stroke-width="1.8" stroke-linejoin="miter"/><path d="M1254.5 148 V155 H1261.5" fill="#f0f0f0" stroke="#c9c9c9" stroke-width="1.8"/><rect x="1241" y="139.5" width="19" height="8" fill="#eaeaea" stroke="#cfcfcf" stroke-width="1.6"/><path d="M1242 155.5 H1254 M1242 159.5 H1257 M1242 163.5 H1252 M1242 167.5 H1257 M1242 171.5 H1257" stroke="#d2d2d2" stroke-width="1.4"/><path d="M1298 158 L1312 143 V152 C1332 150 1338 162 1332 172 C1328 178 1320 179 1316 178.5 C1322 174 1326 168 1322 163 C1320 160 1316 160 1312 161 V173 Z" fill="#dcd7d3" stroke="#cdc8c4" stroke-width="1.2" stroke-linejoin="round"/><path d="M1400 158 L1386 143 V152 C1366 150 1360 162 1366 172 C1370 178 1378 179 1382 178.5 C1376 174 1372 168 1376 163 C1378 160 1382 160 1386 161 V173 Z" fill="#dcdedb" stroke="#cdcfcb" stroke-width="1.2" stroke-linejoin="round"/><rect x="1432" y="145" width="2.4" height="2.4" fill="#c6c6c6"/><rect x="1438" y="145" width="2.4" height="2.4" fill="#c6c6c6"/><rect x="1432" y="151" width="2.4" height="2.4" fill="#c6c6c6"/><rect x="1438" y="151" width="2.4" height="2.4" fill="#c6c6c6"/><rect x="1432" y="157" width="2.4" height="2.4" fill="#c6c6c6"/><rect x="1438" y="157" width="2.4" height="2.4" fill="#c6c6c6"/><rect x="1432" y="163" width="2.4" height="2.4" fill="#c6c6c6"/><rect x="1438" y="163" width="2.4" height="2.4" fill="#c6c6c6"/><rect x="1432" y="169" width="2.4" height="2.4" fill="#c6c6c6"/><rect x="1438" y="169" width="2.4" height="2.4" fill="#c6c6c6"/><rect x="1432" y="175" width="2.4" height="2.4" fill="#c6c6c6"/><rect x="1438" y="175" width="2.4" height="2.4" fill="#c6c6c6"/><path d="M1456 156.0 L1463 145.5 H1497.5 V166.5 H1463 Z" fill="#e6e4dd" stroke="#d3d0c7" stroke-width="1.6" stroke-linejoin="miter"/><text x="1478" y="163" text-anchor="middle" font-family="Liberation Sans" font-weight="bold" font-size="17" fill="#c4c4c4">abc</text><circle cx="1539.5" cy="154.6" r="13.2" fill="#c9ccc6" stroke="#d2d0ca" stroke-width="1"/><path d="M1539.5 154.6 V141.4 A13.2 13.2 0 0 1 1551 161 Z" fill="#d4c9c9"/><path d="M1539.5 154.6 L1528 161 A13.2 13.2 0 0 1 1539.5 141.4 Z" fill="#d6d4cb"/><rect x="1542" y="169" width="8" height="13" fill="#d8d6cd"/><rect x="1550.5" y="157" width="7" height="25" fill="#c2cbc8" stroke="#b8c1be" stroke-width="1"/><rect x="1558.5" y="171" width="7" height="11" fill="#d9cccf" stroke="#cfc2c5" stroke-width="1"/><rect x="1585.2" y="142" width="2" height="37" fill="#d2d2d2"/><defs><linearGradient id="tb" x1="0" y1="0" x2="0" y2="1"><stop offset="0" stop-color="#e8f1fb"/><stop offset="1" stop-color="#b6d1f1"/></linearGradient><radialGradient id="rb" cx="0.35" cy="0.3" r="0.7"><stop offset="0" stop-color="#e06b6b"/><stop offset="0.5" stop-color="#a82020"/><stop offset="1" stop-color="#7a1414"/></radialGradient><linearGradient id="tr" x1="0" y1="0" x2="0" y2="1"><stop offset="0" stop-color="#fff5f5"/><stop offset="1" stop-color="#f5c0c0"/></linearGradient></defs><path d="M1602.5 156.0 L1609.5 145.5 H1643.5 V166.5 H1609.5 Z" fill="url(#tb)" stroke="#3d8ee8" stroke-width="1.8" stroke-linejoin="miter"/><text x="1619" y="162" text-anchor="middle" font-family="Liberation Sans" font-weight="bold" font-size="17" fill="#222">ab</text><path d="M1636 156 L1639 170" stroke="#555" stroke-width="4.5" stroke-linecap="round"/><path d="M1636 156 L1639 170" stroke="#fff" stroke-width="2.5" stroke-linecap="round"/><circle cx="1639.5" cy="172.5" r="9.2" fill="url(#rb)"/><path d="M1668.5 156.0 L1675.5 145.5 H1710 V166.5 H1675.5 Z" fill="url(#tr)" stroke="#e8000b" stroke-width="1.9" stroke-linejoin="miter"/><text x="1691" y="162.5" text-anchor="middle" font-family="Liberation Sans" font-weight="bold" font-size="17" fill="#e3000b">abc</text><rect x="1731.3" y="142" width="2" height="37" fill="#d2d2d2"/><path d="M1748.5 156.0 L1755.5 145.5 H1789.5 V166.5 H1755.5 Z" fill="#e6e4dd" stroke="#d3d0c7" stroke-width="1.6" stroke-linejoin="miter"/><text x="1765" y="162" text-anchor="middle" font-family="Liberation Sans" font-weight="bold" font-size="17" fill="#c4c4c4">ab</text><path d="M1782 156 L1785 170" stroke="#cfcfcf" stroke-width="4" stroke-linecap="round"/><path d="M1782 156 L1785 170" stroke="#f4f4f4" stroke-width="2" stroke-linecap="round"/><circle cx="1785.2" cy="172.5" r="9.2" fill="#cdc8c8"/><circle cx="1783" cy="169.5" r="2.5" fill="#ddd"/><path d="M1840.5 155.3 L1846.0 160.8 L1840.5 166.3 M1849.0 155.3 L1854.5 160.8 L1849.0 166.3" fill="none" stroke="#2b2b2b" stroke-width="2.4" stroke-linecap="round"/><rect x="1875" y="145" width="2.4" height="2.4" fill="#c6c6c6"/><rect x="1881" y="145" width="2.4" height="2.4" fill="#c6c6c6"/><rect x="1875" y="151" width="2.4" height="2.4" fill="#c6c6c6"/><rect x="1881" y="151" width="2.4" height="2.4" fill="#c6c6c6"/><rect x="1875" y="157" width="2.4" height="2.4" fill="#c6c6c6"/><rect x="1881" y="157" width="2.4" height="2.4" fill="#c6c6c6"/><rect x="1875" y="163" width="2.4" height="2.4" fill="#c6c6c6"/><rect x="1881" y="163" width="2.4" height="2.4" fill="#c6c6c6"/><rect x="1875" y="169" width="2.4" height="2.4" fill="#c6c6c6"/><rect x="1881" y="169" width="2.4" height="2.4" fill="#c6c6c6"/><rect x="1875" y="175" width="2.4" height="2.4" fill="#c6c6c6"/><rect x="1881" y="175" width="2.4" height="2.4" fill="#c6c6c6"/><defs><linearGradient id="gl" x1="0" x2="1"><stop offset="0" stop-color="#444"/><stop offset="0.3" stop-color="#eee"/><stop offset="0.5" stop-color="#3f86d8"/><stop offset="0.7" stop-color="#eee"/><stop offset="1" stop-color="#444"/></linearGradient></defs><ellipse cx="1922" cy="158" rx="23.5" ry="20.3" fill="url(#gl)" stroke="#4a87d6" stroke-width="2"/><path d="M1922 138 C1908 146 1908 170 1922 178 C1936 170 1936 146 1922 138 Z M1899 151 H1945 M1899 165 H1945" fill="none" stroke="#5d97de" stroke-width="1.6"/><rect x="1928" y="167" width="17.5" height="17.5" rx="3" fill="#5a9a5e" stroke="#3f7a45" stroke-width="1"/><path d="M1931.5 175.7 H1942 M1936.7 170.5 V181" stroke="#fff" stroke-width="3.2"/><polygon points="1940,180 1950,180 1945,185" fill="#222"/><path d="M1964.5 155.3 L1970.0 160.8 L1964.5 166.3 M1973.0 155.3 L1978.5 160.8 L1973.0 166.3" fill="none" stroke="#2b2b2b" stroke-width="2.4" stroke-linecap="round"/><rect x="1998.5" y="145" width="2.4" height="2.4" fill="#c6c6c6"/><rect x="2004.5" y="145" width="2.4" height="2.4" fill="#c6c6c6"/><rect x="1998.5" y="151" width="2.4" height="2.4" fill="#c6c6c6"/><rect x="2004.5" y="151" width="2.4" height="2.4" fill="#c6c6c6"/><rect x="1998.5" y="157" width="2.4" height="2.4" fill="#c6c6c6"/><rect x="2004.5" y="157" width="2.4" height="2.4" fill="#c6c6c6"/><rect x="1998.5" y="163" width="2.4" height="2.4" fill="#c6c6c6"/><rect x="2004.5" y="163" width="2.4" height="2.4" fill="#c6c6c6"/><rect x="1998.5" y="169" width="2.4" height="2.4" fill="#c6c6c6"/><rect x="2004.5" y="169" width="2.4" height="2.4" fill="#c6c6c6"/><rect x="1998.5" y="175" width="2.4" height="2.4" fill="#c6c6c6"/><rect x="2004.5" y="175" width="2.4" height="2.4" fill="#c6c6c6"/><path d="M2045 141 C2035 141 2036 146 2036 150 V154 H2046 V156 H2031 C2026 156 2025.5 162 2025.5 166 C2025.5 172 2028 176 2032 176 H2036 V170 C2036 166 2039 163 2043 163 H2051 C2054 163 2056 161 2056 158 V148 C2056 143 2051 141 2045 141 Z" fill="#3a74b0"/><path d="M2047 180.5 C2057 180.5 2056 175.5 2056 171.5 V167.5 H2046 V165.5 H2061 C2066 165.5 2066.5 159.5 2066.5 155.5 C2066.5 149.5 2064 145.5 2060 145.5 H2056 V151.5 C2056 155.5 2053 158.5 2049 158.5 H2041 C2038 158.5 2036 160.5 2036 163.5 V173.5 C2036 178.5 2041 180.5 2047 180.5 Z" fill="#f8cf3e"/><circle cx="2040" cy="146" r="1.9" fill="#fff"/><circle cx="2052" cy="175.5" r="1.9" fill="#fff"/><path d="M2057 172 L2067 177 L2057 182" fill="none" stroke="#333" stroke-width="1.8"/><path d="M2088.5 155.3 L2094.0 160.8 L2088.5 166.3 M2097.0 155.3 L2102.5 160.8 L2097.0 166.3" fill="none" stroke="#2b2b2b" stroke-width="2.4" stroke-linecap="round"/><rect x="0" y="222" width="2.4" height="2.4" fill="#c6c6c6"/><rect x="6" y="222" width="2.4" height="2.4" fill="#c6c6c6"/><rect x="0" y="228" width="2.4" height="2.4" fill="#c6c6c6"/><rect x="6" y="228" width="2.4" height="2.4" fill="#c6c6c6"/><rect x="0" y="234" width="2.4" height="2.4" fill="#c6c6c6"/><rect x="6" y="234" width="2.4" height="2.4" fill="#c6c6c6"/><rect x="0" y="240" width="2.4" height="2.4" fill="#c6c6c6"/><rect x="6" y="240" width="2.4" height="2.4" fill="#c6c6c6"/><rect x="0" y="246" width="2.4" height="2.4" fill="#c6c6c6"/><rect x="6" y="246" width="2.4" height="2.4" fill="#c6c6c6"/><rect x="0" y="252" width="2.4" height="2.4" fill="#c6c6c6"/><rect x="6" y="252" width="2.4" height="2.4" fill="#c6c6c6"/><path d="M28.2 242 L35.3 235.3 L47.5 246.5 C50.5 249.3 54.5 249.3 57 246.5 C59.6 243.6 59.6 239.6 56.9 237 L44.1 225.9 L51.2 219.4 L63.5 231.5 C69.5 237.5 69.5 248 63 254 C56 260.5 45.5 260 39.5 253.5 Z" fill="#d40000" stroke="#7a0000" stroke-width="1.6" stroke-linejoin="round"/><path d="M29.6 242 L35.4 236.6 L40.6 242 L36.2 246.6 Z M45.6 225.9 L51.2 220.8 L56.2 226.4 L52 230.6 Z" fill="#ececea"/><path d="M102 221 L111 238 L118 223 M104 231 L111 238 L112 254 M118 223 H131 M114 234 H131" fill="none" stroke="#d6d6d6" stroke-width="1.8"/><rect x="99.5" y="218.5" width="6" height="6" fill="#f0f0f0" stroke="#d0d0d0" stroke-width="1.2"/><rect x="99.5" y="228.5" width="6" height="6" fill="#f0f0f0" stroke="#d0d0d0" stroke-width="1.2"/><rect x="108.5" y="235.5" width="6" height="6" fill="#f0f0f0" stroke="#d0d0d0" stroke-width="1.2"/><rect x="109.5" y="250.5" width="6" height="6" fill="#f0f0f0" stroke="#d0d0d0" stroke-width="1.2"/><rect x="117.5" y="219.5" width="6" height="6" fill="#f0f0f0" stroke="#d0d0d0" stroke-width="1.2"/><rect x="127.5" y="219.5" width="6" height="6" fill="#f0f0f0" stroke="#d0d0d0" stroke-width="1.2"/><rect x="117.5" y="231.5" width="6" height="6" fill="#f0f0f0" stroke="#d0d0d0" stroke-width="1.2"/><rect x="127.5" y="231.5" width="6" height="6" fill="#f0f0f0" stroke="#d0d0d0" stroke-width="1.2"/><polygon points="130.0,257.6 141.0,257.6 135.5,263.6" fill="#444"/><rect x="149" y="209.5" width="62" height="60.5" rx="5" fill="#d4d4d4" stroke="#bdbdbd" stroke-width="1.5"/><rect x="164.5" y="223.5" width="7" height="7" fill="none" stroke="#b5b5b5" stroke-width="1.5"/><rect x="188.5" y="227.5" width="7" height="7" fill="none" stroke="#b5b5b5" stroke-width="1.5"/><rect x="176.5" y="249.5" width="7" height="7" fill="none" stroke="#b5b5b5" stroke-width="1.5"/><polygon points="196.5,257.5 207.5,257.5 202,263.5" fill="#444"/><path d="M630 219 L640 237 L666 228 M640 237 V259" fill="none" stroke="#7cc07a" stroke-width="3.2" stroke-linecap="round"/><rect x="635" y="232" width="10" height="10" fill="#9a9a9a" stroke="#7d7d7d" stroke-width="1.2"/><rect x="638" y="235" width="4" height="4" fill="#cfcfcf"/><path d="M691 241 C687 228 700 216 718 219 C728 220 734 224 732 232 C731 240 725 241 716 240 C710 239 708 235 702 240 Z" fill="#c2c2c2" stroke="#444" stroke-width="2.2"/><path d="M692 240 C688 230 694 222 702 222 C712 222 716 233 718 243 C720 250 725 252 724 256 C722 262 712 263 707 258 C702 252 705 248 700 246 Z" fill="#8dc98a" stroke="#444" stroke-width="2.2"/><path d="M700 238 L717 236" stroke="#444" stroke-width="1.6" stroke-dasharray="3 2"/><polygon points="728.5,257.2 739.5,257.2 734,263.2" fill="#444"/><path d="M757 218 L799 259 M799 218 L757 259" stroke="#dcdedb" stroke-width="3" stroke-linecap="round"/><circle cx="778" cy="238.5" r="4" fill="#e8e8e8" stroke="#d8d8d8" stroke-width="1.5"/><path d="M822.5 258.8 L864.7 218.5" stroke="#dcdedb" stroke-width="3" stroke-linecap="round"/><path d="M827.9 221.1 L837.8 233.7 L853.9 231.9 L859.3 256.1 L851.2 243.6 L832.4 244.5 Z" fill="#d9d6ca" stroke="#d0cdc1" stroke-width="0.8" stroke-linejoin="round"/><polygon points="880.0,235.0 896.0,235.0 888,243.0" fill="#444"/><path d="M918 229 L942 243 M918 229 L926 254 L914 260" fill="none" stroke="#dcdcdc" stroke-width="2.5"/><circle cx="918" cy="229" r="4" fill="#ececec" stroke="#d4d4d4" stroke-width="1.8"/><circle cx="926" cy="253" r="4" fill="#ececec" stroke="#d4d4d4" stroke-width="1.8"/><path d="M952 247 L950.8 239.5 L937.5 218.4 L932.5 221.6 L945.7 242.7 Z" fill="#e6e4dd" stroke="#cfccc4" stroke-width="1.2" stroke-linejoin="round"/><path d="M952 247 L950.8 239.5 L945.7 242.7 Z" fill="#eeeeee" stroke="#cfccc4" stroke-width="1"/><rect x="986" y="223" width="2.4" height="2.4" fill="#c6c6c6"/><rect x="992" y="223" width="2.4" height="2.4" fill="#c6c6c6"/><rect x="986" y="229" width="2.4" height="2.4" fill="#c6c6c6"/><rect x="992" y="229" width="2.4" height="2.4" fill="#c6c6c6"/><rect x="986" y="235" width="2.4" height="2.4" fill="#c6c6c6"/><rect x="992" y="235" width="2.4" height="2.4" fill="#c6c6c6"/><rect x="986" y="241" width="2.4" height="2.4" fill="#c6c6c6"/><rect x="992" y="241" width="2.4" height="2.4" fill="#c6c6c6"/><rect x="986" y="247" width="2.4" height="2.4" fill="#c6c6c6"/><rect x="992" y="247" width="2.4" height="2.4" fill="#c6c6c6"/><rect x="986" y="253" width="2.4" height="2.4" fill="#c6c6c6"/><rect x="992" y="253" width="2.4" height="2.4" fill="#c6c6c6"/><path d="M1531 220.5 L1543.5 232 L1554 221 L1561 228.3 H1576.6 V254.3 H1560.8 L1554 248 L1543.3 258.2 L1531 246.4 Z" fill="#c8c8c8" stroke="#666" stroke-width="1.3" stroke-linejoin="round"/><path d="M1532 222 L1543.5 233 V256.5 L1532 245.5 Z" fill="#dfe9d9"/><path d="M1543.5 233 L1554 222.5 V247 L1543.5 256.5 Z" fill="#a8b8a0"/><path d="M1554 222.5 L1561 229 V253.5 L1554 247 Z" fill="#cfe2c6"/><path d="M1561 229.3 H1575.5 V253.3 H1561 Z" fill="#e8d898"/><path d="M1533 230 C1536 236 1540 242 1545 241 C1550 240 1553 236 1556 240 C1558 245 1562 248 1569 249 L1572 254" fill="none" stroke="#e87830" stroke-width="1.5"/><path d="M1570 248 L1566 242 A4.5 4.5 0 1 1 1574 242 Z" fill="#8a0c0c"/><circle cx="1570" cy="239.5" r="1.5" fill="#fff"/><rect x="1603.5" y="223" width="2.4" height="2.4" fill="#c6c6c6"/><rect x="1609.5" y="223" width="2.4" height="2.4" fill="#c6c6c6"/><rect x="1603.5" y="229" width="2.4" height="2.4" fill="#c6c6c6"/><rect x="1609.5" y="229" width="2.4" height="2.4" fill="#c6c6c6"/><rect x="1603.5" y="235" width="2.4" height="2.4" fill="#c6c6c6"/><rect x="1609.5" y="235" width="2.4" height="2.4" fill="#c6c6c6"/><rect x="1603.5" y="241" width="2.4" height="2.4" fill="#c6c6c6"/><rect x="1609.5" y="241" width="2.4" height="2.4" fill="#c6c6c6"/><rect x="1603.5" y="247" width="2.4" height="2.4" fill="#c6c6c6"/><rect x="1609.5" y="247" width="2.4" height="2.4" fill="#c6c6c6"/><rect x="1603.5" y="253" width="2.4" height="2.4" fill="#c6c6c6"/><rect x="1609.5" y="253" width="2.4" height="2.4" fill="#c6c6c6"/><defs><linearGradient id="gs" x1="0" y1="0" x2="0" y2="1"><stop offset="0" stop-color="#6fa84e"/><stop offset="1" stop-color="#9fd27e"/></linearGradient></defs><rect x="1628.2" y="215" width="47.8" height="47.8" fill="url(#gs)"/><path d="M1660 215 H1676 V231 Z" fill="#fff" opacity="0.18"/><circle cx="1656.3" cy="234.4" r="13.5" fill="none" stroke="#f4f6fb" stroke-width="4"/><line x1="1647" y1="244" x2="1634.5" y2="256.5" stroke="#f4f6fb" stroke-width="5" stroke-linecap="round"/><rect x="1694" y="215" width="41" height="48" fill="#fcd349"/><rect x="1694" y="215" width="7" height="48" fill="#8c1f4a"/><path d="M1697 219 L1706 221 L1717 230 L1700 233 Z" fill="#3cb04a"/><path d="M1717 215 C1716 226 1722 234 1730 240 L1735 256 L1730 263 L1722 254 C1712 246 1708 230 1711 215 Z" fill="#2f6fd8"/><rect x="1697" y="232" width="6" height="14" fill="#b86a8a"/><rect x="1706" y="235" width="5" height="10" fill="#2a7a8a"/><path d="M1694 258 C1704 253 1716 257 1735 263" fill="none" stroke="#2f6fd8" stroke-width="3"/><path d="M1739 219 L1712 246" stroke="#5a2a08" stroke-width="6.5" stroke-linecap="round"/><path d="M1739 219 L1712 246" stroke="#b0581c" stroke-width="4" stroke-linecap="round"/><path d="M1712 246 L1707 252 L1714 249" fill="#333"/><path d="M1694 254 C1700 250 1705 251 1708 250" fill="none" stroke="#333" stroke-width="1.2" stroke-dasharray="2 1.5"/></svg><div style="position:absolute;left:215px;top:217.5px;width:194px;height:45px;background:#fff;border:1.5px solid #a9a9a9;border-radius:5px;"></div><div style="position:absolute;left:219px;top:221px;width:160px;height:38px;background:#fff;border:1.5px solid #d2d2d2;border-bottom-color:#eaeaea;"></div><div style="position:absolute;left:379px;top:219px;width:29px;height:42px;background:linear-gradient(#fbfbfb,#eeeeee);border-left:1.5px solid #a9a9a9;border-radius:0 4px 4px 0;"></div><svg style="position:absolute;left:0;top:0;overflow:visible" width="1" height="1"><polygon points="386.5,235.0 401.5,235.0 394,227.0" fill="#555"/></svg><svg style="position:absolute;left:0;top:0;overflow:visible" width="1" height="1"><polygon points="386.5,244.0 401.5,244.0 394,252.0" fill="#555"/></svg><div style="position:absolute;left:225px;top:227.99px;height:31.2px;line-height:26px;font-size:26px;font-weight:normal;color:#a8a8a8;white-space:pre;">12</div><div style="position:absolute;left:412px;top:216px;width:200px;height:46px;background:linear-gradient(#fafafa,#efefef);border:1.5px solid #c2c2c2;border-radius:5px;"></div><svg style="position:absolute;left:0;top:0;overflow:visible" width="1" height="1"><polygon points="581.0,235.0 597.0,235.0 589,243.0" fill="#bdbdbd"/></svg><div style="position:absolute;left:423px;top:227.57px;height:31.799999999999997px;line-height:26.5px;font-size:26.5px;font-weight:normal;color:#a3a3a3;white-space:pre;">px</div><div style="position:absolute;left:1003px;top:227.40px;height:32.04px;line-height:26.7px;font-size:26.7px;font-weight:normal;color:#111;white-space:pre;">Select a basemap</div><div style="position:absolute;left:1220.5px;top:215.5px;width:299px;height:47px;background:linear-gradient(#ffffff,#f1f1f1);border:1.5px solid #b8b8b8;border-radius:5px;"></div><svg style="position:absolute;left:0;top:0;overflow:visible" width="1" height="1"><polygon points="1487.5,233.5 1504.5,233.5 1496,242.5" fill="#555"/></svg><div style="position:absolute;left:1230px;top:227.40px;height:32.04px;line-height:26.7px;font-size:26.7px;font-weight:normal;color:#111;white-space:pre;letter-spacing:0.5px;">OpenStreetMap</div><svg style="position:absolute;left:0;top:0" width="520" height="1000" viewBox="0 0 520 1000"><rect x="8.8" y="333.8" width="23" height="22.5" fill="#f0f0ee" stroke="#7f7f7a" stroke-width="1.6"/><rect x="24.2" y="351" width="11.8" height="11.8" rx="2" fill="#5a9a5e" stroke="#3f7a45" stroke-width="0.8"/><path d="M26.6 356.9 H33.6 M30.1 353.4 V360.4" stroke="#fff" stroke-width="2.2"/><defs><linearGradient id="rf2" x1="0" y1="0" x2="0" y2="1"><stop offset="0" stop-color="#8fb6e3"/><stop offset="1" stop-color="#3c78c0"/></linearGradient></defs><path d="M58.5 346 C58.5 334 75 328 82 336 L86 331 V346 H73.5 L77.5 341 C72 336 62 338 61 346 Z" fill="url(#rf2)" stroke="#2e67b0" stroke-width="0.8"/><path d="M86 347.5 C86 359.5 69.5 365.5 62.5 357.5 L58.5 362.5 V347.5 H71 L67 352.5 C72.5 357.5 82.5 355.5 83.5 347.5 Z" fill="url(#rf2)" stroke="#2e67b0" stroke-width="0.8"/><path d="M108.8 333.5 H135.2 V337.5 L125.5 349.5 V362.5 L118.5 359.5 V349.5 L108.8 337.5 Z" fill="#6b9bcd" stroke="#2f4f78" stroke-width="1.4" stroke-linejoin="round"/><rect x="110.0" y="334.3" width="23.999999999999993" height="4.2" fill="#fde94d"/><path d="M160 335.5 H186 M161 335.5 V359.5 M161 343.5 H168 M161 355.5 H168" fill="none" stroke="#a9a9a9" stroke-width="1.6"/><rect x="165" y="340.5" width="5" height="5" fill="#fde94d" stroke="#f59a10" stroke-width="1.8"/><rect x="165" y="352.5" width="5" height="5" fill="#fde94d" stroke="#f59a10" stroke-width="1.8"/><path d="M176.5 332.5 L186.0 342.5 H180.5 V358.5 H172.5 V342.5 H167.0 Z" fill="#6b9bcd" stroke="#2f4f78" stroke-width="1.4" stroke-linejoin="round"/><defs><radialGradient id="ig2" cx="0.4" cy="0.3" r="0.7"><stop offset="0" stop-color="#9fbde3"/><stop offset="1" stop-color="#5a86c0"/></radialGradient></defs><circle cx="221.8" cy="346.8" r="12.8" fill="url(#ig2)" stroke="#2f4f78" stroke-width="1.3"/><text x="220.5" y="355.5" text-anchor="middle" font-family="Liberation Serif" font-style="italic" font-weight="bold" font-size="20" fill="#fff">i</text><path d="M8 951 L16 937 L30 943 L22 958 Z" fill="#ecd84a"/><path d="M8 951 L13 942 L22 946 L17 955 Z" fill="#6f9bd6"/><path d="M8 951 L11 946 L20 950 L17 956 Z" fill="#e23b3b"/><path d="M14 950 L24 939 L33 948 L22 960 Z" fill="#d8b37a" stroke="#a87a3a" stroke-width="1"/><path d="M25 944 L36 933.5" stroke="#c8801e" stroke-width="3.2" stroke-linecap="round"/><path d="M58.5 947 V964 H74 M61.5 943 V960 H76 M64.5 939 H84 V954" fill="none" stroke="#858585" stroke-width="1.6"/><rect x="64.5" y="939" width="19.5" height="17" fill="#ececec" stroke="#858585" stroke-width="1.6"/><path d="M73.5 952 V937 C73.5 932 79 932 79 937 V955" fill="none" stroke="#2f5b90" stroke-width="1.6"/><rect x="74.3" y="952.7" width="11.3" height="11.9" rx="2" fill="#5a9a5e" stroke="#3f7a45" stroke-width="0.8"/><path d="M76.6 958.6 H83.3 M79.95 955.3 V962" stroke="#fff" stroke-width="2.2"/><path d="M107.5 950 C114 938 132 936 137 948 C132 960 114 961 107.5 950 Z" fill="#f0f0f0" stroke="#777" stroke-width="1.4"/><path d="M108 945 C116 935 128 935 134 940" fill="none" stroke="#777" stroke-width="1.2"/><circle cx="121.3" cy="949.2" r="7.8" fill="#6b9bcd" stroke="#2f4f78" stroke-width="1.2"/><circle cx="122" cy="947.5" r="2.8" fill="#111"/><circle cx="121" cy="946.5" r="1" fill="#fff"/><polygon points="130.2,959.7 142.2,959.7 136.2,965.7" fill="#444"/><path d="M158.6 934.8 H185.3 V938.8 L175.45 950.8 V964.2 L168.45 961.2 V950.8 L158.6 938.8 Z" fill="#6b9bcd" stroke="#2f4f78" stroke-width="1.4" stroke-linejoin="round"/><rect x="159.79999999999998" y="935.5999999999999" width="24.30000000000002" height="4.2" fill="#fde94d"/><polygon points="179.7,959.7 191.7,959.7 185.7,965.7" fill="#444"/><text x="208" y="957" font-family="Liberation Serif" font-size="31" fill="#d2d2d2">ε</text><path d="M223 965 V955 C223 951 238 951 238 955 V965 M227 965 V956 H234 V965" fill="#dcdcdc" stroke="#d6d6d6" stroke-width="1"/><polygon points="249.7,945.2 265.7,945.2 257.7,953.2" fill="#444"/><path d="M284 937.5 H310 M285 937.5 V961.5 M285 945.5 H292 M285 957.5 H292" fill="none" stroke="#a9a9a9" stroke-width="1.6"/><rect x="289" y="942.5" width="5" height="5" fill="#fde94d" stroke="#f59a10" stroke-width="1.8"/><rect x="289" y="954.5" width="5" height="5" fill="#fde94d" stroke="#f59a10" stroke-width="1.8"/><path d="M300.5 961.5 L310.0 951.5 H304.5 V935.5 H296.5 V951.5 H291.0 Z" fill="#6b9bcd" stroke="#2f4f78" stroke-width="1.4" stroke-linejoin="round"/><path d="M334 936.5 H360 M335 936.5 V960.5 M335 944.5 H342 M335 956.5 H342" fill="none" stroke="#a9a9a9" stroke-width="1.6"/><rect x="339" y="941.5" width="5" height="5" fill="#fde94d" stroke="#f59a10" stroke-width="1.8"/><rect x="339" y="953.5" width="5" height="5" fill="#fde94d" stroke="#f59a10" stroke-width="1.8"/><path d="M350.5 933.5 L360.0 943.5 H354.5 V959.5 H346.5 V943.5 H341.0 Z" fill="#6b9bcd" stroke="#2f4f78" stroke-width="1.4" stroke-linejoin="round"/><rect x="383.3" y="936" width="22" height="22" fill="none" stroke="#7f7f7a" stroke-width="1.6"/><rect x="398" y="952.7" width="12.5" height="10.5" rx="2.5" fill="#e8323c"/><path d="M400.8 958 H407.7" stroke="#fff" stroke-width="2.4"/></svg><svg style="position:absolute;left:0;top:0" width="2119" height="1477" viewBox="0 0 2119 1477">
<defs>
<clipPath id="slc"><polygon points="1278.4,347.3 1333.7,343.0 1339.1,351.7 1352.1,371.2 1368.3,386.3 1390.0,403.7 1420.0,425.3 1457.6,461.5 1473.0,500.1 1485.9,525.9 1514.2,554.2 1547.7,600.5 1550.3,623.7 1560.6,627.5 1573.4,631.4 1587.9,690.0 1594.9,725.2 1612.5,742.8 1619.6,760.4 1633.7,788.6 1658.3,813.2 1675.9,848.5 1683.0,883.7 1684.7,918.9 1686.5,954.1 1679.4,989.3 1675.9,1024.5 1654.8,1059.7 1612.5,1094.9 1577.3,1123.1 1542.1,1144.2 1489.3,1161.8 1436.5,1183.0 1408.3,1193.5 1373.1,1186.5 1330.8,1175.9 1295.6,1144.2 1274.5,1077.3 1260.4,1024.5 1246.3,971.7 1242.8,918.9 1235.8,848.5 1232.6,800.0 1233.6,784.3 1237.6,743.7 1233.6,723.4 1235.6,703.0 1241.7,672.6 1247.8,642.0 1251.9,625.9 1262.0,613.7 1268.0,589.3 1260.0,561.0 1262.0,544.7 1249.2,525.9 1264.0,528.4 1267.2,525.9 1287.8,518.1 1298.1,500.1 1301.0,490.0 1303.3,465.4 1290.3,454.6 1290.3,439.4 1316.3,425.3 1318.5,418.8 1290.3,395.0 1290.3,393.0 1341.2,413.0 1360.7,412.5 1341.2,397.2 1325.0,388.5 1312.0,388.0 1292.5,385.2 1281.7,384.2 1280.6,394.0 1278.4,394.0"/><polygon points="1221.4,676.6 1225,680 1220,700 1219,720 1228,742 1234,758 1231,762 1221,746 1213,722 1213.3,697"/><polygon points="1230,630 1234,632 1231,650 1228,648"/><rect x="1277" y="418" width="5" height="5"/><rect x="1277" y="460" width="4" height="4"/><polygon points="1278.4,394 1281,394 1280,402 1278,401"/></clipPath>
<filter id="tn" x="0" y="0" width="100%" height="100%" color-interpolation-filters="sRGB">
<feTurbulence type="fractalNoise" baseFrequency="0.22 0.16" numOctaves="3" seed="3" result="n"/>
<feDiffuseLighting in="n" surfaceScale="5" diffuseConstant="1.2" lighting-color="#ffffff" result="l"><feDistantLight azimuth="225" elevation="35"/></feDiffuseLighting>
<feColorMatrix type="matrix" values="1 0 0 0 0  1 0 0 0 0  1 0 0 0 0  0 0 0 0 1"/>
<feComponentTransfer><feFuncR type="linear" slope="0.85" intercept="-0.26"/><feFuncG type="linear" slope="0.85" intercept="-0.26"/><feFuncB type="linear" slope="0.85" intercept="-0.26"/></feComponentTransfer>
</filter>
</defs>
<rect x="1062" y="307" width="652" height="1088" fill="#b3b3b3" stroke="#aaaaaa" stroke-width="1"/>
<g clip-path="url(#slc)">
<rect x="1200" y="330" width="500" height="880" fill="#080808"/>
<rect x="1200" y="330" width="500" height="880" filter="url(#tn)"/>
</g>
</svg><div style="position:absolute;left:679px;top:784px;width:338px;height:36px;background:#3d6fdc;box-shadow:0 6px 22px rgba(0,0,0,0.22);overflow:hidden;"></div><svg style="position:absolute;left:685px;top:786px;" width="32" height="32" viewBox="0 0 32 32"><defs><linearGradient id="vbg2" x1="0" y1="1" x2="1" y2="0"><stop offset="0" stop-color="#3f66c8"/><stop offset="1" stop-color="#f4f6fb"/></linearGradient></defs><path d="M4.3 27 L14.6 4.8 H26.9" fill="none" stroke="#8f8f8f" stroke-width="1.6"/><ellipse cx="21.5" cy="21" rx="8.8" ry="6.6" transform="rotate(-35 21.5 21)" fill="url(#vbg2)" stroke="#8f8f8f" stroke-width="1.8"/><circle cx="4.3" cy="9.1" r="2.2" fill="#e8e8e8" stroke="#8a8a8a" stroke-width="1.2"/><circle cx="14.6" cy="4.8" r="2.2" fill="#e8e8e8" stroke="#8a8a8a" stroke-width="1.2"/><circle cx="26.9" cy="4.8" r="2.2" fill="#e8e8e8" stroke="#8a8a8a" stroke-width="1.2"/><circle cx="4.3" cy="27" r="2.2" fill="#e8e8e8" stroke="#8a8a8a" stroke-width="1.2"/></svg><div style="position:absolute;left:679px;top:784px;width:338px;height:36px;overflow:hidden;"><div style="position:absolute;left:51px;top:4.31px;height:32.16px;line-height:26.8px;font-size:26.8px;font-weight:normal;color:#ffffff;white-space:pre;letter-spacing:0.05px;">ne_10m_admin_0_countries</div></div>
</body></html>
